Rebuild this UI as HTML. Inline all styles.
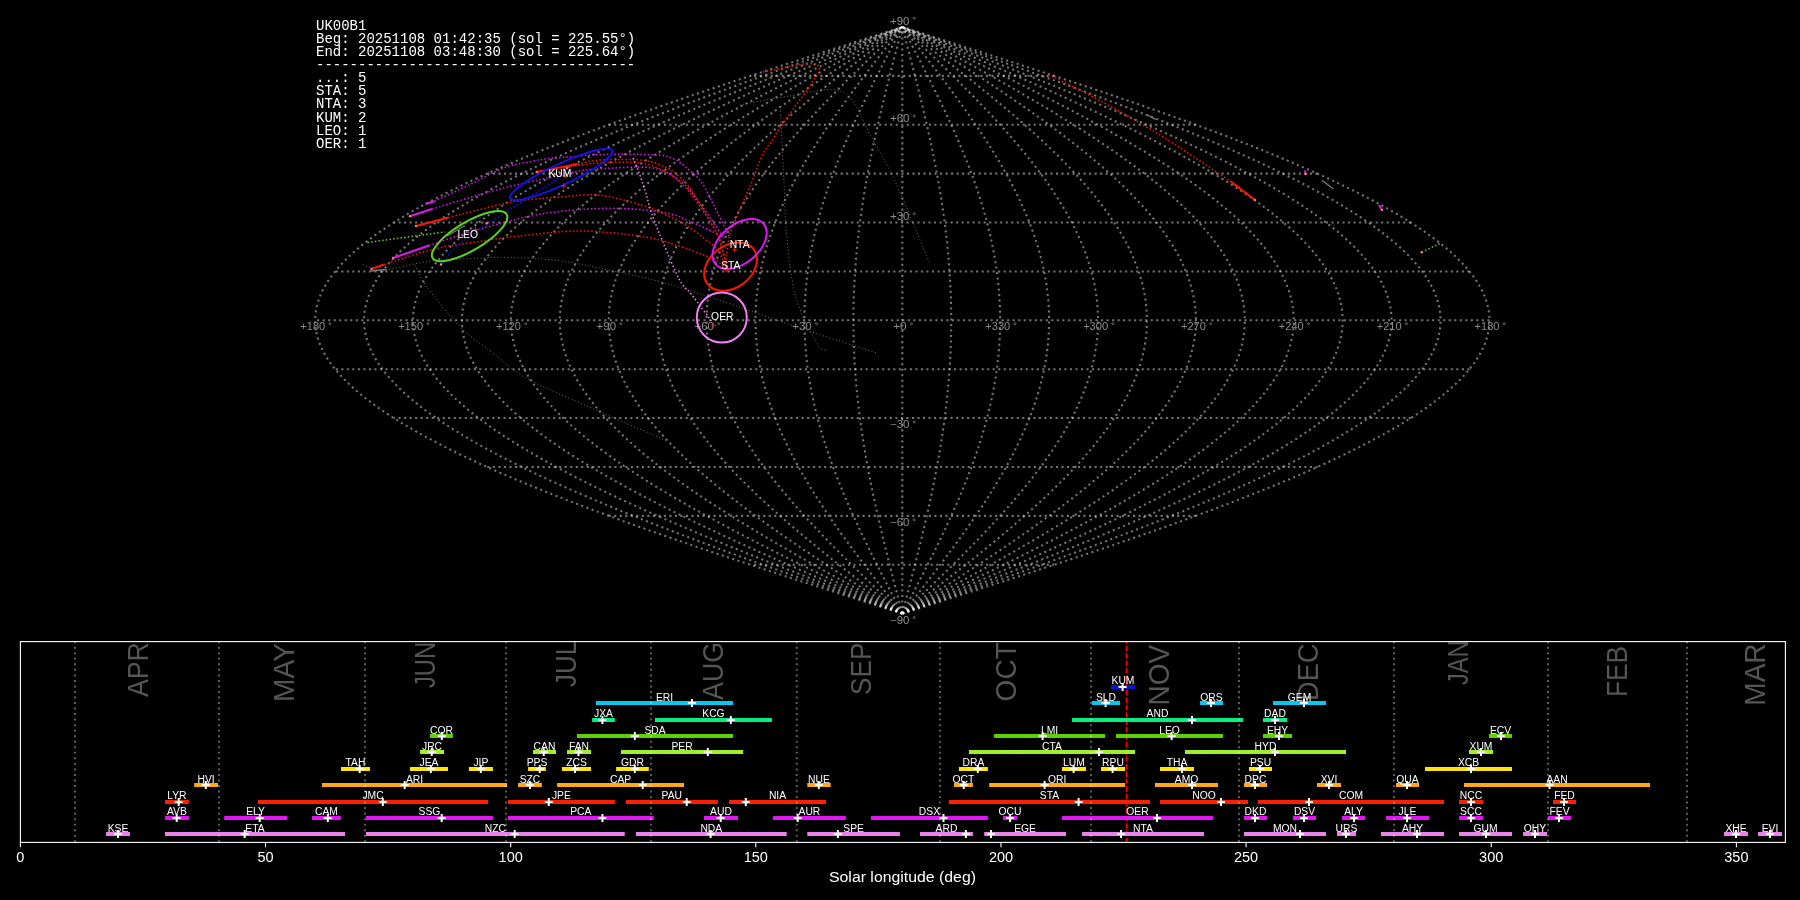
<!DOCTYPE html><html><head><meta charset="utf-8"><style>html,body{margin:0;padding:0;background:#000;width:1800px;height:900px;overflow:hidden}svg{display:block;will-change:transform}</style></head><body>
<svg width="1800" height="900" viewBox="0 0 1800 900">
<rect width="1800" height="900" fill="#000"/>
<g fill="none" stroke="#fff" stroke-opacity="0.45" stroke-width="2.08" stroke-dasharray="2.08 3.44">
<path d="M1054.27 564.73H750.33"/>
<path d="M1195.88 515.84H608.72"/>
<path d="M1317.48 466.96H487.12"/>
<path d="M1410.80 418.07H393.80"/>
<path d="M1469.45 369.19H335.15"/>
<path d="M1489.46 320.30H315.14"/>
<path d="M1469.45 271.42H335.15"/>
<path d="M1410.80 222.53H393.80"/>
<path d="M1317.48 173.65H487.12"/>
<path d="M1195.88 124.76H608.72"/>
<path d="M1054.27 75.88H750.33"/>
<path d="M902.30 613.61L912.55 610.35L922.79 607.09L933.03 603.83L943.26 600.57L953.47 597.32L963.67 594.06L973.86 590.80L984.02 587.54L994.15 584.28L1004.26 581.02L1014.34 577.76L1024.38 574.50L1034.38 571.24L1044.35 567.98L1054.27 564.73L1064.14 561.47L1073.97 558.21L1083.74 554.95L1093.46 551.69L1103.12 548.43L1112.72 545.17L1122.25 541.91L1131.72 538.65L1141.12 535.39L1150.44 532.13L1159.69 528.88L1168.87 525.62L1177.95 522.36L1186.96 519.10L1195.88 515.84L1204.71 512.58L1213.45 509.32L1222.09 506.06L1230.64 502.80L1239.08 499.55L1247.42 496.29L1255.66 493.03L1263.79 489.77L1271.81 486.51L1279.72 483.25L1287.51 479.99L1295.19 476.73L1302.74 473.47L1310.18 470.21L1317.48 466.96L1324.67 463.70L1331.72 460.44L1338.64 457.18L1345.44 453.92L1352.09 450.66L1358.61 447.40L1364.99 444.14L1371.23 440.88L1377.32 437.62L1383.27 434.37L1389.08 431.11L1394.73 427.85L1400.24 424.59L1405.59 421.33L1410.80 418.07L1415.84 414.81L1420.73 411.55L1425.46 408.29L1430.04 405.03L1434.45 401.77L1438.70 398.52L1442.78 395.26L1446.71 392.00L1450.46 388.74L1454.05 385.48L1457.47 382.22L1460.72 378.96L1463.80 375.70L1466.71 372.44L1469.45 369.19L1472.02 365.93L1474.41 362.67L1476.63 359.41L1478.67 356.15L1480.54 352.89L1482.23 349.63L1483.75 346.37L1485.08 343.11L1486.24 339.85L1487.23 336.60L1488.03 333.34L1488.66 330.08L1489.10 326.82L1489.37 323.56L1489.46 320.30L1489.37 317.04L1489.10 313.78L1488.66 310.52L1488.03 307.26L1487.23 304.00L1486.24 300.75L1485.08 297.49L1483.75 294.23L1482.23 290.97L1480.54 287.71L1478.67 284.45L1476.63 281.19L1474.41 277.93L1472.02 274.67L1469.45 271.42L1466.71 268.16L1463.80 264.90L1460.72 261.64L1457.47 258.38L1454.05 255.12L1450.46 251.86L1446.71 248.60L1442.78 245.34L1438.70 242.08L1434.45 238.83L1430.04 235.57L1425.46 232.31L1420.73 229.05L1415.84 225.79L1410.80 222.53L1405.59 219.27L1400.24 216.01L1394.73 212.75L1389.08 209.49L1383.27 206.24L1377.32 202.98L1371.23 199.72L1364.99 196.46L1358.61 193.20L1352.09 189.94L1345.44 186.68L1338.64 183.42L1331.72 180.16L1324.67 176.90L1317.48 173.65L1310.18 170.39L1302.74 167.13L1295.19 163.87L1287.51 160.61L1279.72 157.35L1271.81 154.09L1263.79 150.83L1255.66 147.57L1247.42 144.31L1239.08 141.06L1230.64 137.80L1222.09 134.54L1213.45 131.28L1204.71 128.02L1195.88 124.76L1186.96 121.50L1177.95 118.24L1168.87 114.98L1159.69 111.72L1150.44 108.47L1141.12 105.21L1131.72 101.95L1122.25 98.69L1112.72 95.43L1103.12 92.17L1093.46 88.91L1083.74 85.65L1073.97 82.39L1064.14 79.13L1054.27 75.88L1044.35 72.62L1034.38 69.36L1024.38 66.10L1014.34 62.84L1004.26 59.58L994.15 56.32L984.02 53.06L973.86 49.80L963.67 46.54L953.47 43.29L943.26 40.03L933.03 36.77L922.79 33.51L912.55 30.25L902.30 26.99"/>
<path d="M902.30 613.61L911.69 610.35L921.08 607.09L930.47 603.83L939.85 600.57L949.21 597.32L958.56 594.06L967.89 590.80L977.21 587.54L986.50 584.28L995.76 581.02L1005.00 577.76L1014.20 574.50L1023.38 571.24L1032.51 567.98L1041.60 564.73L1050.66 561.47L1059.66 558.21L1068.62 554.95L1077.53 551.69L1086.39 548.43L1095.18 545.17L1103.92 541.91L1112.60 538.65L1121.22 535.39L1129.77 532.13L1138.24 528.88L1146.65 525.62L1154.98 522.36L1163.24 519.10L1171.41 515.84L1179.51 512.58L1187.52 509.32L1195.44 506.06L1203.27 502.80L1211.02 499.55L1218.66 496.29L1226.21 493.03L1233.67 489.77L1241.02 486.51L1248.27 483.25L1255.41 479.99L1262.45 476.73L1269.37 473.47L1276.19 470.21L1282.89 466.96L1289.47 463.70L1295.94 460.44L1302.28 457.18L1308.51 453.92L1314.61 450.66L1320.58 447.40L1326.43 444.14L1332.15 440.88L1337.74 437.62L1343.19 434.37L1348.51 431.11L1353.70 427.85L1358.74 424.59L1363.65 421.33L1368.42 418.07L1373.05 414.81L1377.53 411.55L1381.87 408.29L1386.06 405.03L1390.10 401.77L1394.00 398.52L1397.74 395.26L1401.34 392.00L1404.78 388.74L1408.07 385.48L1411.21 382.22L1414.19 378.96L1417.01 375.70L1419.68 372.44L1422.19 369.19L1424.54 365.93L1426.74 362.67L1428.77 359.41L1430.64 356.15L1432.35 352.89L1433.90 349.63L1435.29 346.37L1436.52 343.11L1437.58 339.85L1438.48 336.60L1439.22 333.34L1439.79 330.08L1440.20 326.82L1440.45 323.56L1440.53 320.30L1440.45 317.04L1440.20 313.78L1439.79 310.52L1439.22 307.26L1438.48 304.00L1437.58 300.75L1436.52 297.49L1435.29 294.23L1433.90 290.97L1432.35 287.71L1430.64 284.45L1428.77 281.19L1426.74 277.93L1424.54 274.67L1422.19 271.42L1419.68 268.16L1417.01 264.90L1414.19 261.64L1411.21 258.38L1408.07 255.12L1404.78 251.86L1401.34 248.60L1397.74 245.34L1394.00 242.08L1390.10 238.83L1386.06 235.57L1381.87 232.31L1377.53 229.05L1373.05 225.79L1368.42 222.53L1363.65 219.27L1358.74 216.01L1353.70 212.75L1348.51 209.49L1343.19 206.24L1337.74 202.98L1332.15 199.72L1326.43 196.46L1320.58 193.20L1314.61 189.94L1308.51 186.68L1302.28 183.42L1295.94 180.16L1289.47 176.90L1282.89 173.65L1276.19 170.39L1269.37 167.13L1262.45 163.87L1255.41 160.61L1248.27 157.35L1241.02 154.09L1233.67 150.83L1226.21 147.57L1218.66 144.31L1211.02 141.06L1203.27 137.80L1195.44 134.54L1187.52 131.28L1179.51 128.02L1171.41 124.76L1163.24 121.50L1154.98 118.24L1146.65 114.98L1138.24 111.72L1129.77 108.47L1121.22 105.21L1112.60 101.95L1103.92 98.69L1095.18 95.43L1086.39 92.17L1077.53 88.91L1068.62 85.65L1059.66 82.39L1050.66 79.13L1041.60 75.88L1032.51 72.62L1023.38 69.36L1014.20 66.10L1005.00 62.84L995.76 59.58L986.50 56.32L977.21 53.06L967.89 49.80L958.56 46.54L949.21 43.29L939.85 40.03L930.47 36.77L921.08 33.51L911.69 30.25L902.30 26.99"/>
<path d="M902.30 613.61L910.84 610.35L919.38 607.09L927.91 603.83L936.43 600.57L944.95 597.32L953.45 594.06L961.93 590.80L970.40 587.54L978.84 584.28L987.27 581.02L995.66 577.76L1004.03 574.50L1012.37 571.24L1020.67 567.98L1028.94 564.73L1037.17 561.47L1045.36 558.21L1053.50 554.95L1061.60 551.69L1069.65 548.43L1077.65 545.17L1085.60 541.91L1093.48 538.65L1101.32 535.39L1109.09 532.13L1116.80 528.88L1124.44 525.62L1132.01 522.36L1139.52 519.10L1146.95 515.84L1154.31 512.58L1161.59 509.32L1168.79 506.06L1175.91 502.80L1182.95 499.55L1189.90 496.29L1196.77 493.03L1203.54 489.77L1210.23 486.51L1216.82 483.25L1223.31 479.99L1229.71 476.73L1236.00 473.47L1242.20 470.21L1248.29 466.96L1254.27 463.70L1260.15 460.44L1265.92 457.18L1271.58 453.92L1277.13 450.66L1282.56 447.40L1287.87 444.14L1293.07 440.88L1298.15 437.62L1303.11 434.37L1307.95 431.11L1312.66 427.85L1317.25 424.59L1321.71 421.33L1326.05 418.07L1330.25 414.81L1334.33 411.55L1338.27 408.29L1342.08 405.03L1345.76 401.77L1349.30 398.52L1352.70 395.26L1355.97 392.00L1359.10 388.74L1362.09 385.48L1364.94 382.22L1367.65 378.96L1370.22 375.70L1372.65 372.44L1374.93 369.19L1377.07 365.93L1379.06 362.67L1380.91 359.41L1382.61 356.15L1384.17 352.89L1385.58 349.63L1386.84 346.37L1387.95 343.11L1388.92 339.85L1389.74 336.60L1390.41 333.34L1390.93 330.08L1391.30 326.82L1391.53 323.56L1391.60 320.30L1391.53 317.04L1391.30 313.78L1390.93 310.52L1390.41 307.26L1389.74 304.00L1388.92 300.75L1387.95 297.49L1386.84 294.23L1385.58 290.97L1384.17 287.71L1382.61 284.45L1380.91 281.19L1379.06 277.93L1377.07 274.67L1374.93 271.42L1372.65 268.16L1370.22 264.90L1367.65 261.64L1364.94 258.38L1362.09 255.12L1359.10 251.86L1355.97 248.60L1352.70 245.34L1349.30 242.08L1345.76 238.83L1342.08 235.57L1338.27 232.31L1334.33 229.05L1330.25 225.79L1326.05 222.53L1321.71 219.27L1317.25 216.01L1312.66 212.75L1307.95 209.49L1303.11 206.24L1298.15 202.98L1293.07 199.72L1287.87 196.46L1282.56 193.20L1277.13 189.94L1271.58 186.68L1265.92 183.42L1260.15 180.16L1254.27 176.90L1248.29 173.65L1242.20 170.39L1236.00 167.13L1229.71 163.87L1223.31 160.61L1216.82 157.35L1210.23 154.09L1203.54 150.83L1196.77 147.57L1189.90 144.31L1182.95 141.06L1175.91 137.80L1168.79 134.54L1161.59 131.28L1154.31 128.02L1146.95 124.76L1139.52 121.50L1132.01 118.24L1124.44 114.98L1116.80 111.72L1109.09 108.47L1101.32 105.21L1093.48 101.95L1085.60 98.69L1077.65 95.43L1069.65 92.17L1061.60 88.91L1053.50 85.65L1045.36 82.39L1037.17 79.13L1028.94 75.88L1020.67 72.62L1012.37 69.36L1004.03 66.10L995.66 62.84L987.27 59.58L978.84 56.32L970.40 53.06L961.93 49.80L953.45 46.54L944.95 43.29L936.43 40.03L927.91 36.77L919.38 33.51L910.84 30.25L902.30 26.99"/>
<path d="M902.30 613.61L909.99 610.35L917.67 607.09L925.35 603.83L933.02 600.57L940.68 597.32L948.33 594.06L955.97 590.80L963.59 587.54L971.19 584.28L978.77 581.02L986.33 577.76L993.86 574.50L1001.36 571.24L1008.84 567.98L1016.28 564.73L1023.68 561.47L1031.05 558.21L1038.38 554.95L1045.67 551.69L1052.92 548.43L1060.11 545.17L1067.27 541.91L1074.37 538.65L1081.41 535.39L1088.41 532.13L1095.35 528.88L1102.22 525.62L1109.04 522.36L1115.80 519.10L1122.49 515.84L1129.11 512.58L1135.66 509.32L1142.14 506.06L1148.55 502.80L1154.89 499.55L1161.14 496.29L1167.32 493.03L1173.42 489.77L1179.43 486.51L1185.36 483.25L1191.21 479.99L1196.97 476.73L1202.63 473.47L1208.21 470.21L1213.69 466.96L1219.08 463.70L1224.37 460.44L1229.56 457.18L1234.65 453.92L1239.64 450.66L1244.53 447.40L1249.32 444.14L1254.00 440.88L1258.57 437.62L1263.03 434.37L1267.38 431.11L1271.63 427.85L1275.75 424.59L1279.77 421.33L1283.67 418.07L1287.46 414.81L1291.12 411.55L1294.67 408.29L1298.10 405.03L1301.41 401.77L1304.60 398.52L1307.66 395.26L1310.60 392.00L1313.42 388.74L1316.11 385.48L1318.68 382.22L1321.12 378.96L1323.43 375.70L1325.61 372.44L1327.66 369.19L1329.59 365.93L1331.38 362.67L1333.05 359.41L1334.58 356.15L1335.98 352.89L1337.25 349.63L1338.38 346.37L1339.39 343.11L1340.26 339.85L1340.99 336.60L1341.60 333.34L1342.07 330.08L1342.40 326.82L1342.60 323.56L1342.67 320.30L1342.60 317.04L1342.40 313.78L1342.07 310.52L1341.60 307.26L1340.99 304.00L1340.26 300.75L1339.39 297.49L1338.38 294.23L1337.25 290.97L1335.98 287.71L1334.58 284.45L1333.05 281.19L1331.38 277.93L1329.59 274.67L1327.66 271.42L1325.61 268.16L1323.43 264.90L1321.12 261.64L1318.68 258.38L1316.11 255.12L1313.42 251.86L1310.60 248.60L1307.66 245.34L1304.60 242.08L1301.41 238.83L1298.10 235.57L1294.67 232.31L1291.12 229.05L1287.46 225.79L1283.67 222.53L1279.77 219.27L1275.75 216.01L1271.63 212.75L1267.38 209.49L1263.03 206.24L1258.57 202.98L1254.00 199.72L1249.32 196.46L1244.53 193.20L1239.64 189.94L1234.65 186.68L1229.56 183.42L1224.37 180.16L1219.08 176.90L1213.69 173.65L1208.21 170.39L1202.63 167.13L1196.97 163.87L1191.21 160.61L1185.36 157.35L1179.43 154.09L1173.42 150.83L1167.32 147.57L1161.14 144.31L1154.89 141.06L1148.55 137.80L1142.14 134.54L1135.66 131.28L1129.11 128.02L1122.49 124.76L1115.80 121.50L1109.04 118.24L1102.22 114.98L1095.35 111.72L1088.41 108.47L1081.41 105.21L1074.37 101.95L1067.27 98.69L1060.11 95.43L1052.92 92.17L1045.67 88.91L1038.38 85.65L1031.05 82.39L1023.68 79.13L1016.28 75.88L1008.84 72.62L1001.36 69.36L993.86 66.10L986.33 62.84L978.77 59.58L971.19 56.32L963.59 53.06L955.97 49.80L948.33 46.54L940.68 43.29L933.02 40.03L925.35 36.77L917.67 33.51L909.99 30.25L902.30 26.99"/>
<path d="M902.30 613.61L909.13 610.35L915.96 607.09L922.79 603.83L929.61 600.57L936.42 597.32L943.22 594.06L950.00 590.80L956.78 587.54L963.53 584.28L970.27 581.02L976.99 577.76L983.68 574.50L990.35 571.24L997.00 567.98L1003.61 564.73L1010.20 561.47L1016.75 558.21L1023.26 554.95L1029.74 551.69L1036.18 548.43L1042.58 545.17L1048.94 541.91L1055.25 538.65L1061.51 535.39L1067.73 532.13L1073.90 528.88L1080.01 525.62L1086.07 522.36L1092.07 519.10L1098.02 515.84L1103.91 512.58L1109.73 509.32L1115.49 506.06L1121.19 502.80L1126.82 499.55L1132.38 496.29L1137.87 493.03L1143.29 489.77L1148.64 486.51L1153.91 483.25L1159.11 479.99L1164.22 476.73L1169.26 473.47L1174.22 470.21L1179.09 466.96L1183.88 463.70L1188.58 460.44L1193.20 457.18L1197.72 453.92L1202.16 450.66L1206.51 447.40L1210.76 444.14L1214.92 440.88L1218.98 437.62L1222.95 434.37L1226.82 431.11L1230.59 427.85L1234.26 424.59L1237.83 421.33L1241.30 418.07L1244.66 414.81L1247.92 411.55L1251.08 408.29L1254.12 405.03L1257.07 401.77L1259.90 398.52L1262.62 395.26L1265.24 392.00L1267.74 388.74L1270.13 385.48L1272.41 382.22L1274.58 378.96L1276.64 375.70L1278.58 372.44L1280.40 369.19L1282.11 365.93L1283.71 362.67L1285.19 359.41L1286.55 356.15L1287.79 352.89L1288.92 349.63L1289.93 346.37L1290.82 343.11L1291.60 339.85L1292.25 336.60L1292.79 333.34L1293.20 330.08L1293.50 326.82L1293.68 323.56L1293.74 320.30L1293.68 317.04L1293.50 313.78L1293.20 310.52L1292.79 307.26L1292.25 304.00L1291.60 300.75L1290.82 297.49L1289.93 294.23L1288.92 290.97L1287.79 287.71L1286.55 284.45L1285.19 281.19L1283.71 277.93L1282.11 274.67L1280.40 271.42L1278.58 268.16L1276.64 264.90L1274.58 261.64L1272.41 258.38L1270.13 255.12L1267.74 251.86L1265.24 248.60L1262.62 245.34L1259.90 242.08L1257.07 238.83L1254.12 235.57L1251.08 232.31L1247.92 229.05L1244.66 225.79L1241.30 222.53L1237.83 219.27L1234.26 216.01L1230.59 212.75L1226.82 209.49L1222.95 206.24L1218.98 202.98L1214.92 199.72L1210.76 196.46L1206.51 193.20L1202.16 189.94L1197.72 186.68L1193.20 183.42L1188.58 180.16L1183.88 176.90L1179.09 173.65L1174.22 170.39L1169.26 167.13L1164.22 163.87L1159.11 160.61L1153.91 157.35L1148.64 154.09L1143.29 150.83L1137.87 147.57L1132.38 144.31L1126.82 141.06L1121.19 137.80L1115.49 134.54L1109.73 131.28L1103.91 128.02L1098.02 124.76L1092.07 121.50L1086.07 118.24L1080.01 114.98L1073.90 111.72L1067.73 108.47L1061.51 105.21L1055.25 101.95L1048.94 98.69L1042.58 95.43L1036.18 92.17L1029.74 88.91L1023.26 85.65L1016.75 82.39L1010.20 79.13L1003.61 75.88L997.00 72.62L990.35 69.36L983.68 66.10L976.99 62.84L970.27 59.58L963.53 56.32L956.78 53.06L950.00 49.80L943.22 46.54L936.42 43.29L929.61 40.03L922.79 36.77L915.96 33.51L909.13 30.25L902.30 26.99"/>
<path d="M902.30 613.61L908.28 610.35L914.25 607.09L920.23 603.83L926.19 600.57L932.15 597.32L938.10 594.06L944.04 590.80L949.97 587.54L955.88 584.28L961.78 581.02L967.65 577.76L973.51 574.50L979.35 571.24L985.16 567.98L990.95 564.73L996.71 561.47L1002.44 558.21L1008.14 554.95L1013.81 551.69L1019.45 548.43L1025.04 545.17L1030.61 541.91L1036.13 538.65L1041.61 535.39L1047.05 532.13L1052.45 528.88L1057.80 525.62L1063.10 522.36L1068.35 519.10L1073.56 515.84L1078.71 512.58L1083.80 509.32L1088.84 506.06L1093.83 502.80L1098.76 499.55L1103.62 496.29L1108.43 493.03L1113.17 489.77L1117.85 486.51L1122.46 483.25L1127.01 479.99L1131.48 476.73L1135.89 473.47L1140.23 470.21L1144.49 466.96L1148.68 463.70L1152.80 460.44L1156.83 457.18L1160.80 453.92L1164.68 450.66L1168.48 447.40L1172.20 444.14L1175.84 440.88L1179.40 437.62L1182.87 434.37L1186.25 431.11L1189.55 427.85L1192.76 424.59L1195.89 421.33L1198.92 418.07L1201.87 414.81L1204.72 411.55L1207.48 408.29L1210.15 405.03L1212.72 401.77L1215.20 398.52L1217.58 395.26L1219.87 392.00L1222.06 388.74L1224.15 385.48L1226.15 382.22L1228.05 378.96L1229.84 375.70L1231.54 372.44L1233.14 369.19L1234.64 365.93L1236.03 362.67L1237.33 359.41L1238.52 356.15L1239.61 352.89L1240.59 349.63L1241.48 346.37L1242.26 343.11L1242.93 339.85L1243.51 336.60L1243.98 333.34L1244.34 330.08L1244.60 326.82L1244.76 323.56L1244.81 320.30L1244.76 317.04L1244.60 313.78L1244.34 310.52L1243.98 307.26L1243.51 304.00L1242.93 300.75L1242.26 297.49L1241.48 294.23L1240.59 290.97L1239.61 287.71L1238.52 284.45L1237.33 281.19L1236.03 277.93L1234.64 274.67L1233.14 271.42L1231.54 268.16L1229.84 264.90L1228.05 261.64L1226.15 258.38L1224.15 255.12L1222.06 251.86L1219.87 248.60L1217.58 245.34L1215.20 242.08L1212.72 238.83L1210.15 235.57L1207.48 232.31L1204.72 229.05L1201.87 225.79L1198.92 222.53L1195.89 219.27L1192.76 216.01L1189.55 212.75L1186.25 209.49L1182.87 206.24L1179.40 202.98L1175.84 199.72L1172.20 196.46L1168.48 193.20L1164.68 189.94L1160.80 186.68L1156.83 183.42L1152.80 180.16L1148.68 176.90L1144.49 173.65L1140.23 170.39L1135.89 167.13L1131.48 163.87L1127.01 160.61L1122.46 157.35L1117.85 154.09L1113.17 150.83L1108.43 147.57L1103.62 144.31L1098.76 141.06L1093.83 137.80L1088.84 134.54L1083.80 131.28L1078.71 128.02L1073.56 124.76L1068.35 121.50L1063.10 118.24L1057.80 114.98L1052.45 111.72L1047.05 108.47L1041.61 105.21L1036.13 101.95L1030.61 98.69L1025.04 95.43L1019.45 92.17L1013.81 88.91L1008.14 85.65L1002.44 82.39L996.71 79.13L990.95 75.88L985.16 72.62L979.35 69.36L973.51 66.10L967.65 62.84L961.78 59.58L955.88 56.32L949.97 53.06L944.04 49.80L938.10 46.54L932.15 43.29L926.19 40.03L920.23 36.77L914.25 33.51L908.28 30.25L902.30 26.99"/>
<path d="M902.30 613.61L907.42 610.35L912.55 607.09L917.66 603.83L922.78 600.57L927.89 597.32L932.99 594.06L938.08 590.80L943.16 587.54L948.23 584.28L953.28 581.02L958.32 577.76L963.34 574.50L968.34 571.24L973.32 567.98L978.28 564.73L983.22 561.47L988.13 558.21L993.02 554.95L997.88 551.69L1002.71 548.43L1007.51 545.17L1012.28 541.91L1017.01 538.65L1021.71 535.39L1026.37 532.13L1031.00 528.88L1035.58 525.62L1040.13 522.36L1044.63 519.10L1049.09 515.84L1053.50 512.58L1057.87 509.32L1062.20 506.06L1066.47 502.80L1070.69 499.55L1074.86 496.29L1078.98 493.03L1083.05 489.77L1087.06 486.51L1091.01 483.25L1094.91 479.99L1098.74 476.73L1102.52 473.47L1106.24 470.21L1109.89 466.96L1113.48 463.70L1117.01 460.44L1120.47 457.18L1123.87 453.92L1127.20 450.66L1130.45 447.40L1133.64 444.14L1136.76 440.88L1139.81 437.62L1142.79 434.37L1145.69 431.11L1148.52 427.85L1151.27 424.59L1153.95 421.33L1156.55 418.07L1159.07 414.81L1161.52 411.55L1163.88 408.29L1166.17 405.03L1168.37 401.77L1170.50 398.52L1172.54 395.26L1174.50 392.00L1176.38 388.74L1178.17 385.48L1179.89 382.22L1181.51 378.96L1183.05 375.70L1184.51 372.44L1185.88 369.19L1187.16 365.93L1188.36 362.67L1189.46 359.41L1190.49 356.15L1191.42 352.89L1192.27 349.63L1193.02 346.37L1193.69 343.11L1194.27 339.85L1194.76 336.60L1195.16 333.34L1195.48 330.08L1195.70 326.82L1195.84 323.56L1195.88 320.30L1195.84 317.04L1195.70 313.78L1195.48 310.52L1195.16 307.26L1194.76 304.00L1194.27 300.75L1193.69 297.49L1193.02 294.23L1192.27 290.97L1191.42 287.71L1190.49 284.45L1189.46 281.19L1188.36 277.93L1187.16 274.67L1185.88 271.42L1184.51 268.16L1183.05 264.90L1181.51 261.64L1179.89 258.38L1178.17 255.12L1176.38 251.86L1174.50 248.60L1172.54 245.34L1170.50 242.08L1168.37 238.83L1166.17 235.57L1163.88 232.31L1161.52 229.05L1159.07 225.79L1156.55 222.53L1153.95 219.27L1151.27 216.01L1148.52 212.75L1145.69 209.49L1142.79 206.24L1139.81 202.98L1136.76 199.72L1133.64 196.46L1130.45 193.20L1127.20 189.94L1123.87 186.68L1120.47 183.42L1117.01 180.16L1113.48 176.90L1109.89 173.65L1106.24 170.39L1102.52 167.13L1098.74 163.87L1094.91 160.61L1091.01 157.35L1087.06 154.09L1083.05 150.83L1078.98 147.57L1074.86 144.31L1070.69 141.06L1066.47 137.80L1062.20 134.54L1057.87 131.28L1053.50 128.02L1049.09 124.76L1044.63 121.50L1040.13 118.24L1035.58 114.98L1031.00 111.72L1026.37 108.47L1021.71 105.21L1017.01 101.95L1012.28 98.69L1007.51 95.43L1002.71 92.17L997.88 88.91L993.02 85.65L988.13 82.39L983.22 79.13L978.28 75.88L973.32 72.62L968.34 69.36L963.34 66.10L958.32 62.84L953.28 59.58L948.23 56.32L943.16 53.06L938.08 49.80L932.99 46.54L927.89 43.29L922.78 40.03L917.66 36.77L912.55 33.51L907.42 30.25L902.30 26.99"/>
<path d="M902.30 613.61L906.57 610.35L910.84 607.09L915.10 603.83L919.37 600.57L923.62 597.32L927.87 594.06L932.12 590.80L936.35 587.54L940.57 584.28L944.78 581.02L948.98 577.76L953.17 574.50L957.33 571.24L961.49 567.98L965.62 564.73L969.73 561.47L973.83 558.21L977.90 554.95L981.95 551.69L985.98 548.43L989.97 545.17L993.95 541.91L997.89 538.65L1001.81 535.39L1005.69 532.13L1009.55 528.88L1013.37 525.62L1017.16 522.36L1020.91 519.10L1024.62 515.84L1028.30 512.58L1031.94 509.32L1035.55 506.06L1039.11 502.80L1042.63 499.55L1046.10 496.29L1049.53 493.03L1052.92 489.77L1056.26 486.51L1059.56 483.25L1062.80 479.99L1066.00 476.73L1069.15 473.47L1072.25 470.21L1075.29 466.96L1078.29 463.70L1081.23 460.44L1084.11 457.18L1086.94 453.92L1089.71 450.66L1092.43 447.40L1095.09 444.14L1097.69 440.88L1100.23 437.62L1102.71 434.37L1105.12 431.11L1107.48 427.85L1109.77 424.59L1112.01 421.33L1114.17 418.07L1116.28 414.81L1118.31 411.55L1120.28 408.29L1122.19 405.03L1124.03 401.77L1125.80 398.52L1127.50 395.26L1129.14 392.00L1130.70 388.74L1132.20 385.48L1133.62 382.22L1134.98 378.96L1136.26 375.70L1137.47 372.44L1138.61 369.19L1139.68 365.93L1140.68 362.67L1141.60 359.41L1142.46 356.15L1143.23 352.89L1143.94 349.63L1144.57 346.37L1145.13 343.11L1145.61 339.85L1146.02 336.60L1146.35 333.34L1146.61 330.08L1146.80 326.82L1146.91 323.56L1146.95 320.30L1146.91 317.04L1146.80 313.78L1146.61 310.52L1146.35 307.26L1146.02 304.00L1145.61 300.75L1145.13 297.49L1144.57 294.23L1143.94 290.97L1143.23 287.71L1142.46 284.45L1141.60 281.19L1140.68 277.93L1139.68 274.67L1138.61 271.42L1137.47 268.16L1136.26 264.90L1134.98 261.64L1133.62 258.38L1132.20 255.12L1130.70 251.86L1129.14 248.60L1127.50 245.34L1125.80 242.08L1124.03 238.83L1122.19 235.57L1120.28 232.31L1118.31 229.05L1116.28 225.79L1114.17 222.53L1112.01 219.27L1109.77 216.01L1107.48 212.75L1105.12 209.49L1102.71 206.24L1100.23 202.98L1097.69 199.72L1095.09 196.46L1092.43 193.20L1089.71 189.94L1086.94 186.68L1084.11 183.42L1081.23 180.16L1078.29 176.90L1075.29 173.65L1072.25 170.39L1069.15 167.13L1066.00 163.87L1062.80 160.61L1059.56 157.35L1056.26 154.09L1052.92 150.83L1049.53 147.57L1046.10 144.31L1042.63 141.06L1039.11 137.80L1035.55 134.54L1031.94 131.28L1028.30 128.02L1024.62 124.76L1020.91 121.50L1017.16 118.24L1013.37 114.98L1009.55 111.72L1005.69 108.47L1001.81 105.21L997.89 101.95L993.95 98.69L989.97 95.43L985.98 92.17L981.95 88.91L977.90 85.65L973.83 82.39L969.73 79.13L965.62 75.88L961.49 72.62L957.33 69.36L953.17 66.10L948.98 62.84L944.78 59.58L940.57 56.32L936.35 53.06L932.12 49.80L927.87 46.54L923.62 43.29L919.37 40.03L915.10 36.77L910.84 33.51L906.57 30.25L902.30 26.99"/>
<path d="M902.30 613.61L905.72 610.35L909.13 607.09L912.54 603.83L915.95 600.57L919.36 597.32L922.76 594.06L926.15 590.80L929.54 587.54L932.92 584.28L936.29 581.02L939.65 577.76L942.99 574.50L946.33 571.24L949.65 567.98L952.96 564.73L956.25 561.47L959.52 558.21L962.78 554.95L966.02 551.69L969.24 548.43L972.44 545.17L975.62 541.91L978.77 538.65L981.91 535.39L985.01 532.13L988.10 528.88L991.16 525.62L994.18 522.36L997.19 519.10L1000.16 515.84L1003.10 512.58L1006.02 509.32L1008.90 506.06L1011.75 502.80L1014.56 499.55L1017.34 496.29L1020.09 493.03L1022.80 489.77L1025.47 486.51L1028.11 483.25L1030.70 479.99L1033.26 476.73L1035.78 473.47L1038.26 470.21L1040.69 466.96L1043.09 463.70L1045.44 460.44L1047.75 457.18L1050.01 453.92L1052.23 450.66L1054.40 447.40L1056.53 444.14L1058.61 440.88L1060.64 437.62L1062.62 434.37L1064.56 431.11L1066.44 427.85L1068.28 424.59L1070.06 421.33L1071.80 418.07L1073.48 414.81L1075.11 411.55L1076.69 408.29L1078.21 405.03L1079.68 401.77L1081.10 398.52L1082.46 395.26L1083.77 392.00L1085.02 388.74L1086.22 385.48L1087.36 382.22L1088.44 378.96L1089.47 375.70L1090.44 372.44L1091.35 369.19L1092.21 365.93L1093.00 362.67L1093.74 359.41L1094.42 356.15L1095.05 352.89L1095.61 349.63L1096.12 346.37L1096.56 343.11L1096.95 339.85L1097.28 336.60L1097.54 333.34L1097.75 330.08L1097.90 326.82L1097.99 323.56L1098.02 320.30L1097.99 317.04L1097.90 313.78L1097.75 310.52L1097.54 307.26L1097.28 304.00L1096.95 300.75L1096.56 297.49L1096.12 294.23L1095.61 290.97L1095.05 287.71L1094.42 284.45L1093.74 281.19L1093.00 277.93L1092.21 274.67L1091.35 271.42L1090.44 268.16L1089.47 264.90L1088.44 261.64L1087.36 258.38L1086.22 255.12L1085.02 251.86L1083.77 248.60L1082.46 245.34L1081.10 242.08L1079.68 238.83L1078.21 235.57L1076.69 232.31L1075.11 229.05L1073.48 225.79L1071.80 222.53L1070.06 219.27L1068.28 216.01L1066.44 212.75L1064.56 209.49L1062.62 206.24L1060.64 202.98L1058.61 199.72L1056.53 196.46L1054.40 193.20L1052.23 189.94L1050.01 186.68L1047.75 183.42L1045.44 180.16L1043.09 176.90L1040.69 173.65L1038.26 170.39L1035.78 167.13L1033.26 163.87L1030.70 160.61L1028.11 157.35L1025.47 154.09L1022.80 150.83L1020.09 147.57L1017.34 144.31L1014.56 141.06L1011.75 137.80L1008.90 134.54L1006.02 131.28L1003.10 128.02L1000.16 124.76L997.19 121.50L994.18 118.24L991.16 114.98L988.10 111.72L985.01 108.47L981.91 105.21L978.77 101.95L975.62 98.69L972.44 95.43L969.24 92.17L966.02 88.91L962.78 85.65L959.52 82.39L956.25 79.13L952.96 75.88L949.65 72.62L946.33 69.36L942.99 66.10L939.65 62.84L936.29 59.58L932.92 56.32L929.54 53.06L926.15 49.80L922.76 46.54L919.36 43.29L915.95 40.03L912.54 36.77L909.13 33.51L905.72 30.25L902.30 26.99"/>
<path d="M902.30 613.61L904.86 610.35L907.42 607.09L909.98 603.83L912.54 600.57L915.09 597.32L917.64 594.06L920.19 590.80L922.73 587.54L925.26 584.28L927.79 581.02L930.31 577.76L932.82 574.50L935.32 571.24L937.81 567.98L940.29 564.73L942.76 561.47L945.22 558.21L947.66 554.95L950.09 551.69L952.51 548.43L954.90 545.17L957.29 541.91L959.66 538.65L962.00 535.39L964.34 532.13L966.65 528.88L968.94 525.62L971.21 522.36L973.47 519.10L975.69 515.84L977.90 512.58L980.09 509.32L982.25 506.06L984.38 502.80L986.50 499.55L988.58 496.29L990.64 493.03L992.67 489.77L994.68 486.51L996.65 483.25L998.60 479.99L1000.52 476.73L1002.41 473.47L1004.27 470.21L1006.10 466.96L1007.89 463.70L1009.66 460.44L1011.39 457.18L1013.08 453.92L1014.75 450.66L1016.38 447.40L1017.97 444.14L1019.53 440.88L1021.06 437.62L1022.54 434.37L1023.99 431.11L1025.41 427.85L1026.78 424.59L1028.12 421.33L1029.42 418.07L1030.69 414.81L1031.91 411.55L1033.09 408.29L1034.23 405.03L1035.34 401.77L1036.40 398.52L1037.42 395.26L1038.40 392.00L1039.34 388.74L1040.24 385.48L1041.09 382.22L1041.91 378.96L1042.68 375.70L1043.40 372.44L1044.09 369.19L1044.73 365.93L1045.33 362.67L1045.88 359.41L1046.39 356.15L1046.86 352.89L1047.28 349.63L1047.66 346.37L1048.00 343.11L1048.29 339.85L1048.53 336.60L1048.73 333.34L1048.89 330.08L1049.00 326.82L1049.07 323.56L1049.09 320.30L1049.07 317.04L1049.00 313.78L1048.89 310.52L1048.73 307.26L1048.53 304.00L1048.29 300.75L1048.00 297.49L1047.66 294.23L1047.28 290.97L1046.86 287.71L1046.39 284.45L1045.88 281.19L1045.33 277.93L1044.73 274.67L1044.09 271.42L1043.40 268.16L1042.68 264.90L1041.91 261.64L1041.09 258.38L1040.24 255.12L1039.34 251.86L1038.40 248.60L1037.42 245.34L1036.40 242.08L1035.34 238.83L1034.23 235.57L1033.09 232.31L1031.91 229.05L1030.69 225.79L1029.42 222.53L1028.12 219.27L1026.78 216.01L1025.41 212.75L1023.99 209.49L1022.54 206.24L1021.06 202.98L1019.53 199.72L1017.97 196.46L1016.38 193.20L1014.75 189.94L1013.08 186.68L1011.39 183.42L1009.66 180.16L1007.89 176.90L1006.10 173.65L1004.27 170.39L1002.41 167.13L1000.52 163.87L998.60 160.61L996.65 157.35L994.68 154.09L992.67 150.83L990.64 147.57L988.58 144.31L986.50 141.06L984.38 137.80L982.25 134.54L980.09 131.28L977.90 128.02L975.69 124.76L973.47 121.50L971.21 118.24L968.94 114.98L966.65 111.72L964.34 108.47L962.00 105.21L959.66 101.95L957.29 98.69L954.90 95.43L952.51 92.17L950.09 88.91L947.66 85.65L945.22 82.39L942.76 79.13L940.29 75.88L937.81 72.62L935.32 69.36L932.82 66.10L930.31 62.84L927.79 59.58L925.26 56.32L922.73 53.06L920.19 49.80L917.64 46.54L915.09 43.29L912.54 40.03L909.98 36.77L907.42 33.51L904.86 30.25L902.30 26.99"/>
<path d="M902.30 613.61L904.01 610.35L905.72 607.09L907.42 603.83L909.13 600.57L910.83 597.32L912.53 594.06L914.23 590.80L915.92 587.54L917.61 584.28L919.29 581.02L920.97 577.76L922.65 574.50L924.31 571.24L925.97 567.98L927.63 564.73L929.27 561.47L930.91 558.21L932.54 554.95L934.16 551.69L935.77 548.43L937.37 545.17L938.96 541.91L940.54 538.65L942.10 535.39L943.66 532.13L945.20 528.88L946.73 525.62L948.24 522.36L949.74 519.10L951.23 515.84L952.70 512.58L954.16 509.32L955.60 506.06L957.02 502.80L958.43 499.55L959.82 496.29L961.19 493.03L962.55 489.77L963.89 486.51L965.20 483.25L966.50 479.99L967.78 476.73L969.04 473.47L970.28 470.21L971.50 466.96L972.69 463.70L973.87 460.44L975.02 457.18L976.16 453.92L977.27 450.66L978.35 447.40L979.41 444.14L980.45 440.88L981.47 437.62L982.46 434.37L983.43 431.11L984.37 427.85L985.29 424.59L986.18 421.33L987.05 418.07L987.89 414.81L988.71 411.55L989.49 408.29L990.26 405.03L990.99 401.77L991.70 398.52L992.38 395.26L993.03 392.00L993.66 388.74L994.26 385.48L994.83 382.22L995.37 378.96L995.88 375.70L996.37 372.44L996.83 369.19L997.25 365.93L997.65 362.67L998.02 359.41L998.36 356.15L998.67 352.89L998.96 349.63L999.21 346.37L999.43 343.11L999.62 339.85L999.79 336.60L999.92 333.34L1000.03 330.08L1000.10 326.82L1000.15 323.56L1000.16 320.30L1000.15 317.04L1000.10 313.78L1000.03 310.52L999.92 307.26L999.79 304.00L999.62 300.75L999.43 297.49L999.21 294.23L998.96 290.97L998.67 287.71L998.36 284.45L998.02 281.19L997.65 277.93L997.25 274.67L996.83 271.42L996.37 268.16L995.88 264.90L995.37 261.64L994.83 258.38L994.26 255.12L993.66 251.86L993.03 248.60L992.38 245.34L991.70 242.08L990.99 238.83L990.26 235.57L989.49 232.31L988.71 229.05L987.89 225.79L987.05 222.53L986.18 219.27L985.29 216.01L984.37 212.75L983.43 209.49L982.46 206.24L981.47 202.98L980.45 199.72L979.41 196.46L978.35 193.20L977.27 189.94L976.16 186.68L975.02 183.42L973.87 180.16L972.69 176.90L971.50 173.65L970.28 170.39L969.04 167.13L967.78 163.87L966.50 160.61L965.20 157.35L963.89 154.09L962.55 150.83L961.19 147.57L959.82 144.31L958.43 141.06L957.02 137.80L955.60 134.54L954.16 131.28L952.70 128.02L951.23 124.76L949.74 121.50L948.24 118.24L946.73 114.98L945.20 111.72L943.66 108.47L942.10 105.21L940.54 101.95L938.96 98.69L937.37 95.43L935.77 92.17L934.16 88.91L932.54 85.65L930.91 82.39L929.27 79.13L927.63 75.88L925.97 72.62L924.31 69.36L922.65 66.10L920.97 62.84L919.29 59.58L917.61 56.32L915.92 53.06L914.23 49.80L912.53 46.54L910.83 43.29L909.13 40.03L907.42 36.77L905.72 33.51L904.01 30.25L902.30 26.99"/>
<path d="M902.30 613.61L903.15 610.35L904.01 607.09L904.86 603.83L905.71 600.57L906.56 597.32L907.41 594.06L908.26 590.80L909.11 587.54L909.95 584.28L910.80 581.02L911.64 577.76L912.47 574.50L913.31 571.24L914.14 567.98L914.96 564.73L915.79 561.47L916.61 558.21L917.42 554.95L918.23 551.69L919.04 548.43L919.83 545.17L920.63 541.91L921.42 538.65L922.20 535.39L922.98 532.13L923.75 528.88L924.51 525.62L925.27 522.36L926.02 519.10L926.76 515.84L927.50 512.58L928.23 509.32L928.95 506.06L929.66 502.80L930.37 499.55L931.06 496.29L931.75 493.03L932.42 489.77L933.09 486.51L933.75 483.25L934.40 479.99L935.04 476.73L935.67 473.47L936.29 470.21L936.90 466.96L937.50 463.70L938.09 460.44L938.66 457.18L939.23 453.92L939.78 450.66L940.33 447.40L940.86 444.14L941.38 440.88L941.89 437.62L942.38 434.37L942.86 431.11L943.34 427.85L943.79 424.59L944.24 421.33L944.67 418.07L945.10 414.81L945.50 411.55L945.90 408.29L946.28 405.03L946.65 401.77L947.00 398.52L947.34 395.26L947.67 392.00L947.98 388.74L948.28 385.48L948.56 382.22L948.84 378.96L949.09 375.70L949.33 372.44L949.56 369.19L949.78 365.93L949.98 362.67L950.16 359.41L950.33 356.15L950.49 352.89L950.63 349.63L950.75 346.37L950.87 343.11L950.96 339.85L951.04 336.60L951.11 333.34L951.16 330.08L951.20 326.82L951.22 323.56L951.23 320.30L951.22 317.04L951.20 313.78L951.16 310.52L951.11 307.26L951.04 304.00L950.96 300.75L950.87 297.49L950.75 294.23L950.63 290.97L950.49 287.71L950.33 284.45L950.16 281.19L949.98 277.93L949.78 274.67L949.56 271.42L949.33 268.16L949.09 264.90L948.84 261.64L948.56 258.38L948.28 255.12L947.98 251.86L947.67 248.60L947.34 245.34L947.00 242.08L946.65 238.83L946.28 235.57L945.90 232.31L945.50 229.05L945.10 225.79L944.67 222.53L944.24 219.27L943.79 216.01L943.34 212.75L942.86 209.49L942.38 206.24L941.89 202.98L941.38 199.72L940.86 196.46L940.33 193.20L939.78 189.94L939.23 186.68L938.66 183.42L938.09 180.16L937.50 176.90L936.90 173.65L936.29 170.39L935.67 167.13L935.04 163.87L934.40 160.61L933.75 157.35L933.09 154.09L932.42 150.83L931.75 147.57L931.06 144.31L930.37 141.06L929.66 137.80L928.95 134.54L928.23 131.28L927.50 128.02L926.76 124.76L926.02 121.50L925.27 118.24L924.51 114.98L923.75 111.72L922.98 108.47L922.20 105.21L921.42 101.95L920.63 98.69L919.83 95.43L919.04 92.17L918.23 88.91L917.42 85.65L916.61 82.39L915.79 79.13L914.96 75.88L914.14 72.62L913.31 69.36L912.47 66.10L911.64 62.84L910.80 59.58L909.95 56.32L909.11 53.06L908.26 49.80L907.41 46.54L906.56 43.29L905.71 40.03L904.86 36.77L904.01 33.51L903.15 30.25L902.30 26.99"/>
<path d="M902.30 613.61L902.30 610.35L902.30 607.09L902.30 603.83L902.30 600.57L902.30 597.32L902.30 594.06L902.30 590.80L902.30 587.54L902.30 584.28L902.30 581.02L902.30 577.76L902.30 574.50L902.30 571.24L902.30 567.98L902.30 564.73L902.30 561.47L902.30 558.21L902.30 554.95L902.30 551.69L902.30 548.43L902.30 545.17L902.30 541.91L902.30 538.65L902.30 535.39L902.30 532.13L902.30 528.88L902.30 525.62L902.30 522.36L902.30 519.10L902.30 515.84L902.30 512.58L902.30 509.32L902.30 506.06L902.30 502.80L902.30 499.55L902.30 496.29L902.30 493.03L902.30 489.77L902.30 486.51L902.30 483.25L902.30 479.99L902.30 476.73L902.30 473.47L902.30 470.21L902.30 466.96L902.30 463.70L902.30 460.44L902.30 457.18L902.30 453.92L902.30 450.66L902.30 447.40L902.30 444.14L902.30 440.88L902.30 437.62L902.30 434.37L902.30 431.11L902.30 427.85L902.30 424.59L902.30 421.33L902.30 418.07L902.30 414.81L902.30 411.55L902.30 408.29L902.30 405.03L902.30 401.77L902.30 398.52L902.30 395.26L902.30 392.00L902.30 388.74L902.30 385.48L902.30 382.22L902.30 378.96L902.30 375.70L902.30 372.44L902.30 369.19L902.30 365.93L902.30 362.67L902.30 359.41L902.30 356.15L902.30 352.89L902.30 349.63L902.30 346.37L902.30 343.11L902.30 339.85L902.30 336.60L902.30 333.34L902.30 330.08L902.30 326.82L902.30 323.56L902.30 320.30L902.30 317.04L902.30 313.78L902.30 310.52L902.30 307.26L902.30 304.00L902.30 300.75L902.30 297.49L902.30 294.23L902.30 290.97L902.30 287.71L902.30 284.45L902.30 281.19L902.30 277.93L902.30 274.67L902.30 271.42L902.30 268.16L902.30 264.90L902.30 261.64L902.30 258.38L902.30 255.12L902.30 251.86L902.30 248.60L902.30 245.34L902.30 242.08L902.30 238.83L902.30 235.57L902.30 232.31L902.30 229.05L902.30 225.79L902.30 222.53L902.30 219.27L902.30 216.01L902.30 212.75L902.30 209.49L902.30 206.24L902.30 202.98L902.30 199.72L902.30 196.46L902.30 193.20L902.30 189.94L902.30 186.68L902.30 183.42L902.30 180.16L902.30 176.90L902.30 173.65L902.30 170.39L902.30 167.13L902.30 163.87L902.30 160.61L902.30 157.35L902.30 154.09L902.30 150.83L902.30 147.57L902.30 144.31L902.30 141.06L902.30 137.80L902.30 134.54L902.30 131.28L902.30 128.02L902.30 124.76L902.30 121.50L902.30 118.24L902.30 114.98L902.30 111.72L902.30 108.47L902.30 105.21L902.30 101.95L902.30 98.69L902.30 95.43L902.30 92.17L902.30 88.91L902.30 85.65L902.30 82.39L902.30 79.13L902.30 75.88L902.30 72.62L902.30 69.36L902.30 66.10L902.30 62.84L902.30 59.58L902.30 56.32L902.30 53.06L902.30 49.80L902.30 46.54L902.30 43.29L902.30 40.03L902.30 36.77L902.30 33.51L902.30 30.25L902.30 26.99"/>
<path d="M902.30 613.61L901.45 610.35L900.59 607.09L899.74 603.83L898.89 600.57L898.04 597.32L897.19 594.06L896.34 590.80L895.49 587.54L894.65 584.28L893.80 581.02L892.96 577.76L892.13 574.50L891.29 571.24L890.46 567.98L889.64 564.73L888.81 561.47L887.99 558.21L887.18 554.95L886.37 551.69L885.56 548.43L884.77 545.17L883.97 541.91L883.18 538.65L882.40 535.39L881.62 532.13L880.85 528.88L880.09 525.62L879.33 522.36L878.58 519.10L877.83 515.84L877.10 512.58L876.37 509.32L875.65 506.06L874.94 502.80L874.23 499.55L873.54 496.29L872.85 493.03L872.18 489.77L871.51 486.51L870.85 483.25L870.20 479.99L869.56 476.73L868.93 473.47L868.31 470.21L867.70 466.96L867.10 463.70L866.51 460.44L865.94 457.18L865.37 453.92L864.82 450.66L864.27 447.40L863.74 444.14L863.22 440.88L862.71 437.62L862.22 434.37L861.74 431.11L861.26 427.85L860.81 424.59L860.36 421.33L859.93 418.07L859.50 414.81L859.10 411.55L858.70 408.29L858.32 405.03L857.95 401.77L857.60 398.52L857.26 395.26L856.93 392.00L856.62 388.74L856.32 385.48L856.04 382.22L855.76 378.96L855.51 375.70L855.27 372.44L855.04 369.19L854.82 365.93L854.62 362.67L854.44 359.41L854.27 356.15L854.11 352.89L853.97 349.63L853.85 346.37L853.73 343.11L853.64 339.85L853.56 336.60L853.49 333.34L853.44 330.08L853.40 326.82L853.38 323.56L853.37 320.30L853.38 317.04L853.40 313.78L853.44 310.52L853.49 307.26L853.56 304.00L853.64 300.75L853.73 297.49L853.85 294.23L853.97 290.97L854.11 287.71L854.27 284.45L854.44 281.19L854.62 277.93L854.82 274.67L855.04 271.42L855.27 268.16L855.51 264.90L855.76 261.64L856.04 258.38L856.32 255.12L856.62 251.86L856.93 248.60L857.26 245.34L857.60 242.08L857.95 238.83L858.32 235.57L858.70 232.31L859.10 229.05L859.50 225.79L859.93 222.53L860.36 219.27L860.81 216.01L861.26 212.75L861.74 209.49L862.22 206.24L862.71 202.98L863.22 199.72L863.74 196.46L864.27 193.20L864.82 189.94L865.37 186.68L865.94 183.42L866.51 180.16L867.10 176.90L867.70 173.65L868.31 170.39L868.93 167.13L869.56 163.87L870.20 160.61L870.85 157.35L871.51 154.09L872.18 150.83L872.85 147.57L873.54 144.31L874.23 141.06L874.94 137.80L875.65 134.54L876.37 131.28L877.10 128.02L877.83 124.76L878.58 121.50L879.33 118.24L880.09 114.98L880.85 111.72L881.62 108.47L882.40 105.21L883.18 101.95L883.97 98.69L884.77 95.43L885.56 92.17L886.37 88.91L887.18 85.65L887.99 82.39L888.81 79.13L889.64 75.88L890.46 72.62L891.29 69.36L892.13 66.10L892.96 62.84L893.80 59.58L894.65 56.32L895.49 53.06L896.34 49.80L897.19 46.54L898.04 43.29L898.89 40.03L899.74 36.77L900.59 33.51L901.45 30.25L902.30 26.99"/>
<path d="M902.30 613.61L900.59 610.35L898.88 607.09L897.18 603.83L895.47 600.57L893.77 597.32L892.07 594.06L890.37 590.80L888.68 587.54L886.99 584.28L885.31 581.02L883.63 577.76L881.95 574.50L880.29 571.24L878.63 567.98L876.97 564.73L875.33 561.47L873.69 558.21L872.06 554.95L870.44 551.69L868.83 548.43L867.23 545.17L865.64 541.91L864.06 538.65L862.50 535.39L860.94 532.13L859.40 528.88L857.87 525.62L856.36 522.36L854.86 519.10L853.37 515.84L851.90 512.58L850.44 509.32L849.00 506.06L847.58 502.80L846.17 499.55L844.78 496.29L843.41 493.03L842.05 489.77L840.71 486.51L839.40 483.25L838.10 479.99L836.82 476.73L835.56 473.47L834.32 470.21L833.10 466.96L831.91 463.70L830.73 460.44L829.58 457.18L828.44 453.92L827.33 450.66L826.25 447.40L825.19 444.14L824.15 440.88L823.13 437.62L822.14 434.37L821.17 431.11L820.23 427.85L819.31 424.59L818.42 421.33L817.55 418.07L816.71 414.81L815.89 411.55L815.11 408.29L814.34 405.03L813.61 401.77L812.90 398.52L812.22 395.26L811.57 392.00L810.94 388.74L810.34 385.48L809.77 382.22L809.23 378.96L808.72 375.70L808.23 372.44L807.77 369.19L807.35 365.93L806.95 362.67L806.58 359.41L806.24 356.15L805.93 352.89L805.64 349.63L805.39 346.37L805.17 343.11L804.98 339.85L804.81 336.60L804.68 333.34L804.57 330.08L804.50 326.82L804.45 323.56L804.44 320.30L804.45 317.04L804.50 313.78L804.57 310.52L804.68 307.26L804.81 304.00L804.98 300.75L805.17 297.49L805.39 294.23L805.64 290.97L805.93 287.71L806.24 284.45L806.58 281.19L806.95 277.93L807.35 274.67L807.77 271.42L808.23 268.16L808.72 264.90L809.23 261.64L809.77 258.38L810.34 255.12L810.94 251.86L811.57 248.60L812.22 245.34L812.90 242.08L813.61 238.83L814.34 235.57L815.11 232.31L815.89 229.05L816.71 225.79L817.55 222.53L818.42 219.27L819.31 216.01L820.23 212.75L821.17 209.49L822.14 206.24L823.13 202.98L824.15 199.72L825.19 196.46L826.25 193.20L827.33 189.94L828.44 186.68L829.58 183.42L830.73 180.16L831.91 176.90L833.10 173.65L834.32 170.39L835.56 167.13L836.82 163.87L838.10 160.61L839.40 157.35L840.71 154.09L842.05 150.83L843.41 147.57L844.78 144.31L846.17 141.06L847.58 137.80L849.00 134.54L850.44 131.28L851.90 128.02L853.37 124.76L854.86 121.50L856.36 118.24L857.87 114.98L859.40 111.72L860.94 108.47L862.50 105.21L864.06 101.95L865.64 98.69L867.23 95.43L868.83 92.17L870.44 88.91L872.06 85.65L873.69 82.39L875.33 79.13L876.97 75.88L878.63 72.62L880.29 69.36L881.95 66.10L883.63 62.84L885.31 59.58L886.99 56.32L888.68 53.06L890.37 49.80L892.07 46.54L893.77 43.29L895.47 40.03L897.18 36.77L898.88 33.51L900.59 30.25L902.30 26.99"/>
<path d="M902.30 613.61L899.74 610.35L897.18 607.09L894.62 603.83L892.06 600.57L889.51 597.32L886.96 594.06L884.41 590.80L881.87 587.54L879.34 584.28L876.81 581.02L874.29 577.76L871.78 574.50L869.28 571.24L866.79 567.98L864.31 564.73L861.84 561.47L859.38 558.21L856.94 554.95L854.51 551.69L852.09 548.43L849.70 545.17L847.31 541.91L844.94 538.65L842.60 535.39L840.26 532.13L837.95 528.88L835.66 525.62L833.39 522.36L831.13 519.10L828.90 515.84L826.70 512.58L824.51 509.32L822.35 506.06L820.22 502.80L818.10 499.55L816.02 496.29L813.96 493.03L811.93 489.77L809.92 486.51L807.95 483.25L806.00 479.99L804.08 476.73L802.19 473.47L800.33 470.21L798.50 466.96L796.71 463.70L794.94 460.44L793.21 457.18L791.52 453.92L789.85 450.66L788.22 447.40L786.63 444.14L785.07 440.88L783.54 437.62L782.06 434.37L780.61 431.11L779.19 427.85L777.82 424.59L776.48 421.33L775.18 418.07L773.91 414.81L772.69 411.55L771.51 408.29L770.37 405.03L769.26 401.77L768.20 398.52L767.18 395.26L766.20 392.00L765.26 388.74L764.36 385.48L763.51 382.22L762.69 378.96L761.92 375.70L761.20 372.44L760.51 369.19L759.87 365.93L759.27 362.67L758.72 359.41L758.21 356.15L757.74 352.89L757.32 349.63L756.94 346.37L756.60 343.11L756.31 339.85L756.07 336.60L755.87 333.34L755.71 330.08L755.60 326.82L755.53 323.56L755.51 320.30L755.53 317.04L755.60 313.78L755.71 310.52L755.87 307.26L756.07 304.00L756.31 300.75L756.60 297.49L756.94 294.23L757.32 290.97L757.74 287.71L758.21 284.45L758.72 281.19L759.27 277.93L759.87 274.67L760.51 271.42L761.20 268.16L761.92 264.90L762.69 261.64L763.51 258.38L764.36 255.12L765.26 251.86L766.20 248.60L767.18 245.34L768.20 242.08L769.26 238.83L770.37 235.57L771.51 232.31L772.69 229.05L773.91 225.79L775.18 222.53L776.48 219.27L777.82 216.01L779.19 212.75L780.61 209.49L782.06 206.24L783.54 202.98L785.07 199.72L786.63 196.46L788.22 193.20L789.85 189.94L791.52 186.68L793.21 183.42L794.94 180.16L796.71 176.90L798.50 173.65L800.33 170.39L802.19 167.13L804.08 163.87L806.00 160.61L807.95 157.35L809.92 154.09L811.93 150.83L813.96 147.57L816.02 144.31L818.10 141.06L820.22 137.80L822.35 134.54L824.51 131.28L826.70 128.02L828.90 124.76L831.13 121.50L833.39 118.24L835.66 114.98L837.95 111.72L840.26 108.47L842.60 105.21L844.94 101.95L847.31 98.69L849.70 95.43L852.09 92.17L854.51 88.91L856.94 85.65L859.38 82.39L861.84 79.13L864.31 75.88L866.79 72.62L869.28 69.36L871.78 66.10L874.29 62.84L876.81 59.58L879.34 56.32L881.87 53.06L884.41 49.80L886.96 46.54L889.51 43.29L892.06 40.03L894.62 36.77L897.18 33.51L899.74 30.25L902.30 26.99"/>
<path d="M902.30 613.61L898.88 610.35L895.47 607.09L892.06 603.83L888.65 600.57L885.24 597.32L881.84 594.06L878.45 590.80L875.06 587.54L871.68 584.28L868.31 581.02L864.95 577.76L861.61 574.50L858.27 571.24L854.95 567.98L851.64 564.73L848.35 561.47L845.08 558.21L841.82 554.95L838.58 551.69L835.36 548.43L832.16 545.17L828.98 541.91L825.83 538.65L822.69 535.39L819.59 532.13L816.50 528.88L813.44 525.62L810.42 522.36L807.41 519.10L804.44 515.84L801.50 512.58L798.58 509.32L795.70 506.06L792.85 502.80L790.04 499.55L787.26 496.29L784.51 493.03L781.80 489.77L779.13 486.51L776.49 483.25L773.90 479.99L771.34 476.73L768.82 473.47L766.34 470.21L763.91 466.96L761.51 463.70L759.16 460.44L756.85 457.18L754.59 453.92L752.37 450.66L750.20 447.40L748.07 444.14L745.99 440.88L743.96 437.62L741.98 434.37L740.04 431.11L738.16 427.85L736.32 424.59L734.54 421.33L732.80 418.07L731.12 414.81L729.49 411.55L727.91 408.29L726.39 405.03L724.92 401.77L723.50 398.52L722.14 395.26L720.83 392.00L719.58 388.74L718.38 385.48L717.24 382.22L716.16 378.96L715.13 375.70L714.16 372.44L713.25 369.19L712.39 365.93L711.60 362.67L710.86 359.41L710.18 356.15L709.55 352.89L708.99 349.63L708.48 346.37L708.04 343.11L707.65 339.85L707.32 336.60L707.06 333.34L706.85 330.08L706.70 326.82L706.61 323.56L706.58 320.30L706.61 317.04L706.70 313.78L706.85 310.52L707.06 307.26L707.32 304.00L707.65 300.75L708.04 297.49L708.48 294.23L708.99 290.97L709.55 287.71L710.18 284.45L710.86 281.19L711.60 277.93L712.39 274.67L713.25 271.42L714.16 268.16L715.13 264.90L716.16 261.64L717.24 258.38L718.38 255.12L719.58 251.86L720.83 248.60L722.14 245.34L723.50 242.08L724.92 238.83L726.39 235.57L727.91 232.31L729.49 229.05L731.12 225.79L732.80 222.53L734.54 219.27L736.32 216.01L738.16 212.75L740.04 209.49L741.98 206.24L743.96 202.98L745.99 199.72L748.07 196.46L750.20 193.20L752.37 189.94L754.59 186.68L756.85 183.42L759.16 180.16L761.51 176.90L763.91 173.65L766.34 170.39L768.82 167.13L771.34 163.87L773.90 160.61L776.49 157.35L779.13 154.09L781.80 150.83L784.51 147.57L787.26 144.31L790.04 141.06L792.85 137.80L795.70 134.54L798.58 131.28L801.50 128.02L804.44 124.76L807.41 121.50L810.42 118.24L813.44 114.98L816.50 111.72L819.59 108.47L822.69 105.21L825.83 101.95L828.98 98.69L832.16 95.43L835.36 92.17L838.58 88.91L841.82 85.65L845.08 82.39L848.35 79.13L851.64 75.88L854.95 72.62L858.27 69.36L861.61 66.10L864.95 62.84L868.31 59.58L871.68 56.32L875.06 53.06L878.45 49.80L881.84 46.54L885.24 43.29L888.65 40.03L892.06 36.77L895.47 33.51L898.88 30.25L902.30 26.99"/>
<path d="M902.30 613.61L898.03 610.35L893.76 607.09L889.50 603.83L885.23 600.57L880.98 597.32L876.73 594.06L872.48 590.80L868.25 587.54L864.03 584.28L859.82 581.02L855.62 577.76L851.43 574.50L847.27 571.24L843.11 567.98L838.98 564.73L834.87 561.47L830.77 558.21L826.70 554.95L822.65 551.69L818.62 548.43L814.63 545.17L810.65 541.91L806.71 538.65L802.79 535.39L798.91 532.13L795.05 528.88L791.23 525.62L787.44 522.36L783.69 519.10L779.97 515.84L776.30 512.58L772.66 509.32L769.05 506.06L765.49 502.80L761.97 499.55L758.50 496.29L755.07 493.03L751.68 489.77L748.34 486.51L745.04 483.25L741.80 479.99L738.60 476.73L735.45 473.47L732.35 470.21L729.31 466.96L726.31 463.70L723.37 460.44L720.49 457.18L717.66 453.92L714.89 450.66L712.17 447.40L709.51 444.14L706.91 440.88L704.37 437.62L701.89 434.37L699.48 431.11L697.12 427.85L694.83 424.59L692.59 421.33L690.43 418.07L688.32 414.81L686.29 411.55L684.32 408.29L682.41 405.03L680.57 401.77L678.80 398.52L677.10 395.26L675.46 392.00L673.90 388.74L672.40 385.48L670.98 382.22L669.62 378.96L668.34 375.70L667.13 372.44L665.99 369.19L664.92 365.93L663.92 362.67L663.00 359.41L662.14 356.15L661.37 352.89L660.66 349.63L660.03 346.37L659.47 343.11L658.99 339.85L658.58 336.60L658.25 333.34L657.99 330.08L657.80 326.82L657.69 323.56L657.65 320.30L657.69 317.04L657.80 313.78L657.99 310.52L658.25 307.26L658.58 304.00L658.99 300.75L659.47 297.49L660.03 294.23L660.66 290.97L661.37 287.71L662.14 284.45L663.00 281.19L663.92 277.93L664.92 274.67L665.99 271.42L667.13 268.16L668.34 264.90L669.62 261.64L670.98 258.38L672.40 255.12L673.90 251.86L675.46 248.60L677.10 245.34L678.80 242.08L680.57 238.83L682.41 235.57L684.32 232.31L686.29 229.05L688.32 225.79L690.43 222.53L692.59 219.27L694.83 216.01L697.12 212.75L699.48 209.49L701.89 206.24L704.37 202.98L706.91 199.72L709.51 196.46L712.17 193.20L714.89 189.94L717.66 186.68L720.49 183.42L723.37 180.16L726.31 176.90L729.31 173.65L732.35 170.39L735.45 167.13L738.60 163.87L741.80 160.61L745.04 157.35L748.34 154.09L751.68 150.83L755.07 147.57L758.50 144.31L761.97 141.06L765.49 137.80L769.05 134.54L772.66 131.28L776.30 128.02L779.97 124.76L783.69 121.50L787.44 118.24L791.23 114.98L795.05 111.72L798.91 108.47L802.79 105.21L806.71 101.95L810.65 98.69L814.63 95.43L818.62 92.17L822.65 88.91L826.70 85.65L830.77 82.39L834.87 79.13L838.98 75.88L843.11 72.62L847.27 69.36L851.43 66.10L855.62 62.84L859.82 59.58L864.03 56.32L868.25 53.06L872.48 49.80L876.73 46.54L880.98 43.29L885.23 40.03L889.50 36.77L893.76 33.51L898.03 30.25L902.30 26.99"/>
<path d="M902.30 613.61L897.18 610.35L892.05 607.09L886.94 603.83L881.82 600.57L876.71 597.32L871.61 594.06L866.52 590.80L861.44 587.54L856.37 584.28L851.32 581.02L846.28 577.76L841.26 574.50L836.26 571.24L831.28 567.98L826.32 564.73L821.38 561.47L816.47 558.21L811.58 554.95L806.72 551.69L801.89 548.43L797.09 545.17L792.32 541.91L787.59 538.65L782.89 535.39L778.23 532.13L773.60 528.88L769.02 525.62L764.47 522.36L759.97 519.10L755.51 515.84L751.10 512.58L746.73 509.32L742.40 506.06L738.13 502.80L733.91 499.55L729.74 496.29L725.62 493.03L721.55 489.77L717.54 486.51L713.59 483.25L709.69 479.99L705.86 476.73L702.08 473.47L698.36 470.21L694.71 466.96L691.12 463.70L687.59 460.44L684.13 457.18L680.73 453.92L677.40 450.66L674.15 447.40L670.96 444.14L667.84 440.88L664.79 437.62L661.81 434.37L658.91 431.11L656.08 427.85L653.33 424.59L650.65 421.33L648.05 418.07L645.53 414.81L643.08 411.55L640.72 408.29L638.43 405.03L636.23 401.77L634.10 398.52L632.06 395.26L630.10 392.00L628.22 388.74L626.43 385.48L624.71 382.22L623.09 378.96L621.55 375.70L620.09 372.44L618.72 369.19L617.44 365.93L616.24 362.67L615.14 359.41L614.11 356.15L613.18 352.89L612.33 349.63L611.58 346.37L610.91 343.11L610.33 339.85L609.84 336.60L609.44 333.34L609.12 330.08L608.90 326.82L608.76 323.56L608.72 320.30L608.76 317.04L608.90 313.78L609.12 310.52L609.44 307.26L609.84 304.00L610.33 300.75L610.91 297.49L611.58 294.23L612.33 290.97L613.18 287.71L614.11 284.45L615.14 281.19L616.24 277.93L617.44 274.67L618.72 271.42L620.09 268.16L621.55 264.90L623.09 261.64L624.71 258.38L626.43 255.12L628.22 251.86L630.10 248.60L632.06 245.34L634.10 242.08L636.23 238.83L638.43 235.57L640.72 232.31L643.08 229.05L645.53 225.79L648.05 222.53L650.65 219.27L653.33 216.01L656.08 212.75L658.91 209.49L661.81 206.24L664.79 202.98L667.84 199.72L670.96 196.46L674.15 193.20L677.40 189.94L680.73 186.68L684.13 183.42L687.59 180.16L691.12 176.90L694.71 173.65L698.36 170.39L702.08 167.13L705.86 163.87L709.69 160.61L713.59 157.35L717.54 154.09L721.55 150.83L725.62 147.57L729.74 144.31L733.91 141.06L738.13 137.80L742.40 134.54L746.73 131.28L751.10 128.02L755.51 124.76L759.97 121.50L764.47 118.24L769.02 114.98L773.60 111.72L778.23 108.47L782.89 105.21L787.59 101.95L792.32 98.69L797.09 95.43L801.89 92.17L806.72 88.91L811.58 85.65L816.47 82.39L821.38 79.13L826.32 75.88L831.28 72.62L836.26 69.36L841.26 66.10L846.28 62.84L851.32 59.58L856.37 56.32L861.44 53.06L866.52 49.80L871.61 46.54L876.71 43.29L881.82 40.03L886.94 36.77L892.05 33.51L897.18 30.25L902.30 26.99"/>
<path d="M902.30 613.61L896.32 610.35L890.35 607.09L884.37 603.83L878.41 600.57L872.45 597.32L866.50 594.06L860.56 590.80L854.63 587.54L848.72 584.28L842.82 581.02L836.95 577.76L831.09 574.50L825.25 571.24L819.44 567.98L813.65 564.73L807.89 561.47L802.16 558.21L796.46 554.95L790.79 551.69L785.15 548.43L779.56 545.17L773.99 541.91L768.47 538.65L762.99 535.39L757.55 532.13L752.15 528.88L746.80 525.62L741.50 522.36L736.25 519.10L731.04 515.84L725.89 512.58L720.80 509.32L715.76 506.06L710.77 502.80L705.84 499.55L700.98 496.29L696.17 493.03L691.43 489.77L686.75 486.51L682.14 483.25L677.59 479.99L673.12 476.73L668.71 473.47L664.37 470.21L660.11 466.96L655.92 463.70L651.80 460.44L647.77 457.18L643.80 453.92L639.92 450.66L636.12 447.40L632.40 444.14L628.76 440.88L625.20 437.62L621.73 434.37L618.35 431.11L615.05 427.85L611.84 424.59L608.71 421.33L605.68 418.07L602.73 414.81L599.88 411.55L597.12 408.29L594.45 405.03L591.88 401.77L589.40 398.52L587.02 395.26L584.73 392.00L582.54 388.74L580.45 385.48L578.45 382.22L576.55 378.96L574.76 375.70L573.06 372.44L571.46 369.19L569.96 365.93L568.57 362.67L567.27 359.41L566.08 356.15L564.99 352.89L564.01 349.63L563.12 346.37L562.34 343.11L561.67 339.85L561.09 336.60L560.62 333.34L560.26 330.08L560.00 326.82L559.84 323.56L559.79 320.30L559.84 317.04L560.00 313.78L560.26 310.52L560.62 307.26L561.09 304.00L561.67 300.75L562.34 297.49L563.12 294.23L564.01 290.97L564.99 287.71L566.08 284.45L567.27 281.19L568.57 277.93L569.96 274.67L571.46 271.42L573.06 268.16L574.76 264.90L576.55 261.64L578.45 258.38L580.45 255.12L582.54 251.86L584.73 248.60L587.02 245.34L589.40 242.08L591.88 238.83L594.45 235.57L597.12 232.31L599.88 229.05L602.73 225.79L605.68 222.53L608.71 219.27L611.84 216.01L615.05 212.75L618.35 209.49L621.73 206.24L625.20 202.98L628.76 199.72L632.40 196.46L636.12 193.20L639.92 189.94L643.80 186.68L647.77 183.42L651.80 180.16L655.92 176.90L660.11 173.65L664.37 170.39L668.71 167.13L673.12 163.87L677.59 160.61L682.14 157.35L686.75 154.09L691.43 150.83L696.17 147.57L700.98 144.31L705.84 141.06L710.77 137.80L715.76 134.54L720.80 131.28L725.89 128.02L731.04 124.76L736.25 121.50L741.50 118.24L746.80 114.98L752.15 111.72L757.55 108.47L762.99 105.21L768.47 101.95L773.99 98.69L779.56 95.43L785.15 92.17L790.79 88.91L796.46 85.65L802.16 82.39L807.89 79.13L813.65 75.88L819.44 72.62L825.25 69.36L831.09 66.10L836.95 62.84L842.82 59.58L848.72 56.32L854.63 53.06L860.56 49.80L866.50 46.54L872.45 43.29L878.41 40.03L884.37 36.77L890.35 33.51L896.32 30.25L902.30 26.99"/>
<path d="M902.30 613.61L895.47 610.35L888.64 607.09L881.81 603.83L874.99 600.57L868.18 597.32L861.38 594.06L854.60 590.80L847.82 587.54L841.07 584.28L834.33 581.02L827.61 577.76L820.92 574.50L814.25 571.24L807.60 567.98L800.99 564.73L794.40 561.47L787.85 558.21L781.34 554.95L774.86 551.69L768.42 548.43L762.02 545.17L755.66 541.91L749.35 538.65L743.09 535.39L736.87 532.13L730.70 528.88L724.59 525.62L718.53 522.36L712.53 519.10L706.58 515.84L700.69 512.58L694.87 509.32L689.11 506.06L683.41 502.80L677.78 499.55L672.22 496.29L666.73 493.03L661.31 489.77L655.96 486.51L650.69 483.25L645.49 479.99L640.38 476.73L635.34 473.47L630.38 470.21L625.51 466.96L620.72 463.70L616.02 460.44L611.40 457.18L606.88 453.92L602.44 450.66L598.09 447.40L593.84 444.14L589.68 440.88L585.62 437.62L581.65 434.37L577.78 431.11L574.01 427.85L570.34 424.59L566.77 421.33L563.30 418.07L559.94 414.81L556.68 411.55L553.52 408.29L550.48 405.03L547.53 401.77L544.70 398.52L541.98 395.26L539.36 392.00L536.86 388.74L534.47 385.48L532.19 382.22L530.02 378.96L527.96 375.70L526.02 372.44L524.20 369.19L522.49 365.93L520.89 362.67L519.41 359.41L518.05 356.15L516.81 352.89L515.68 349.63L514.67 346.37L513.78 343.11L513.00 339.85L512.35 336.60L511.81 333.34L511.40 330.08L511.10 326.82L510.92 323.56L510.86 320.30L510.92 317.04L511.10 313.78L511.40 310.52L511.81 307.26L512.35 304.00L513.00 300.75L513.78 297.49L514.67 294.23L515.68 290.97L516.81 287.71L518.05 284.45L519.41 281.19L520.89 277.93L522.49 274.67L524.20 271.42L526.02 268.16L527.96 264.90L530.02 261.64L532.19 258.38L534.47 255.12L536.86 251.86L539.36 248.60L541.98 245.34L544.70 242.08L547.53 238.83L550.48 235.57L553.52 232.31L556.68 229.05L559.94 225.79L563.30 222.53L566.77 219.27L570.34 216.01L574.01 212.75L577.78 209.49L581.65 206.24L585.62 202.98L589.68 199.72L593.84 196.46L598.09 193.20L602.44 189.94L606.88 186.68L611.40 183.42L616.02 180.16L620.72 176.90L625.51 173.65L630.38 170.39L635.34 167.13L640.38 163.87L645.49 160.61L650.69 157.35L655.96 154.09L661.31 150.83L666.73 147.57L672.22 144.31L677.78 141.06L683.41 137.80L689.11 134.54L694.87 131.28L700.69 128.02L706.58 124.76L712.53 121.50L718.53 118.24L724.59 114.98L730.70 111.72L736.87 108.47L743.09 105.21L749.35 101.95L755.66 98.69L762.02 95.43L768.42 92.17L774.86 88.91L781.34 85.65L787.85 82.39L794.40 79.13L800.99 75.88L807.60 72.62L814.25 69.36L820.92 66.10L827.61 62.84L834.33 59.58L841.07 56.32L847.82 53.06L854.60 49.80L861.38 46.54L868.18 43.29L874.99 40.03L881.81 36.77L888.64 33.51L895.47 30.25L902.30 26.99"/>
<path d="M902.30 613.61L894.61 610.35L886.93 607.09L879.25 603.83L871.58 600.57L863.92 597.32L856.27 594.06L848.63 590.80L841.01 587.54L833.41 584.28L825.83 581.02L818.27 577.76L810.74 574.50L803.24 571.24L795.76 567.98L788.32 564.73L780.92 561.47L773.55 558.21L766.22 554.95L758.93 551.69L751.68 548.43L744.49 545.17L737.33 541.91L730.23 538.65L723.19 535.39L716.19 532.13L709.25 528.88L702.38 525.62L695.56 522.36L688.80 519.10L682.11 515.84L675.49 512.58L668.94 509.32L662.46 506.06L656.05 502.80L649.71 499.55L643.46 496.29L637.28 493.03L631.18 489.77L625.17 486.51L619.24 483.25L613.39 479.99L607.63 476.73L601.97 473.47L596.39 470.21L590.91 466.96L585.52 463.70L580.23 460.44L575.04 457.18L569.95 453.92L564.96 450.66L560.07 447.40L555.28 444.14L550.60 440.88L546.03 437.62L541.57 434.37L537.22 431.11L532.97 427.85L528.85 424.59L524.83 421.33L520.93 418.07L517.14 414.81L513.48 411.55L509.93 408.29L506.50 405.03L503.19 401.77L500.00 398.52L496.94 395.26L494.00 392.00L491.18 388.74L488.49 385.48L485.92 382.22L483.48 378.96L481.17 375.70L478.99 372.44L476.94 369.19L475.01 365.93L473.22 362.67L471.55 359.41L470.02 356.15L468.62 352.89L467.35 349.63L466.22 346.37L465.21 343.11L464.34 339.85L463.61 336.60L463.00 333.34L462.53 330.08L462.20 326.82L462.00 323.56L461.93 320.30L462.00 317.04L462.20 313.78L462.53 310.52L463.00 307.26L463.61 304.00L464.34 300.75L465.21 297.49L466.22 294.23L467.35 290.97L468.62 287.71L470.02 284.45L471.55 281.19L473.22 277.93L475.01 274.67L476.94 271.42L478.99 268.16L481.17 264.90L483.48 261.64L485.92 258.38L488.49 255.12L491.18 251.86L494.00 248.60L496.94 245.34L500.00 242.08L503.19 238.83L506.50 235.57L509.93 232.31L513.48 229.05L517.14 225.79L520.93 222.53L524.83 219.27L528.85 216.01L532.97 212.75L537.22 209.49L541.57 206.24L546.03 202.98L550.60 199.72L555.28 196.46L560.07 193.20L564.96 189.94L569.95 186.68L575.04 183.42L580.23 180.16L585.52 176.90L590.91 173.65L596.39 170.39L601.97 167.13L607.63 163.87L613.39 160.61L619.24 157.35L625.17 154.09L631.18 150.83L637.28 147.57L643.46 144.31L649.71 141.06L656.05 137.80L662.46 134.54L668.94 131.28L675.49 128.02L682.11 124.76L688.80 121.50L695.56 118.24L702.38 114.98L709.25 111.72L716.19 108.47L723.19 105.21L730.23 101.95L737.33 98.69L744.49 95.43L751.68 92.17L758.93 88.91L766.22 85.65L773.55 82.39L780.92 79.13L788.32 75.88L795.76 72.62L803.24 69.36L810.74 66.10L818.27 62.84L825.83 59.58L833.41 56.32L841.01 53.06L848.63 49.80L856.27 46.54L863.92 43.29L871.58 40.03L879.25 36.77L886.93 33.51L894.61 30.25L902.30 26.99"/>
<path d="M902.30 613.61L893.76 610.35L885.22 607.09L876.69 603.83L868.17 600.57L859.65 597.32L851.15 594.06L842.67 590.80L834.20 587.54L825.76 584.28L817.33 581.02L808.94 577.76L800.57 574.50L792.23 571.24L783.93 567.98L775.66 564.73L767.43 561.47L759.24 558.21L751.10 554.95L743.00 551.69L734.95 548.43L726.95 545.17L719.00 541.91L711.12 538.65L703.28 535.39L695.51 532.13L687.80 528.88L680.16 525.62L672.59 522.36L665.08 519.10L657.65 515.84L650.29 512.58L643.01 509.32L635.81 506.06L628.69 502.80L621.65 499.55L614.70 496.29L607.83 493.03L601.06 489.77L594.37 486.51L587.78 483.25L581.29 479.99L574.89 476.73L568.60 473.47L562.40 470.21L556.31 466.96L550.33 463.70L544.45 460.44L538.68 457.18L533.02 453.92L527.47 450.66L522.04 447.40L516.73 444.14L511.53 440.88L506.45 437.62L501.49 434.37L496.65 431.11L491.94 427.85L487.35 424.59L482.89 421.33L478.55 418.07L474.35 414.81L470.27 411.55L466.33 408.29L462.52 405.03L458.84 401.77L455.30 398.52L451.90 395.26L448.63 392.00L445.50 388.74L442.51 385.48L439.66 382.22L436.95 378.96L434.38 375.70L431.95 372.44L429.67 369.19L427.53 365.93L425.54 362.67L423.69 359.41L421.99 356.15L420.43 352.89L419.02 349.63L417.76 346.37L416.65 343.11L415.68 339.85L414.86 336.60L414.19 333.34L413.67 330.08L413.30 326.82L413.07 323.56L413.00 320.30L413.07 317.04L413.30 313.78L413.67 310.52L414.19 307.26L414.86 304.00L415.68 300.75L416.65 297.49L417.76 294.23L419.02 290.97L420.43 287.71L421.99 284.45L423.69 281.19L425.54 277.93L427.53 274.67L429.67 271.42L431.95 268.16L434.38 264.90L436.95 261.64L439.66 258.38L442.51 255.12L445.50 251.86L448.63 248.60L451.90 245.34L455.30 242.08L458.84 238.83L462.52 235.57L466.33 232.31L470.27 229.05L474.35 225.79L478.55 222.53L482.89 219.27L487.35 216.01L491.94 212.75L496.65 209.49L501.49 206.24L506.45 202.98L511.53 199.72L516.73 196.46L522.04 193.20L527.47 189.94L533.02 186.68L538.68 183.42L544.45 180.16L550.33 176.90L556.31 173.65L562.40 170.39L568.60 167.13L574.89 163.87L581.29 160.61L587.78 157.35L594.37 154.09L601.06 150.83L607.83 147.57L614.70 144.31L621.65 141.06L628.69 137.80L635.81 134.54L643.01 131.28L650.29 128.02L657.65 124.76L665.08 121.50L672.59 118.24L680.16 114.98L687.80 111.72L695.51 108.47L703.28 105.21L711.12 101.95L719.00 98.69L726.95 95.43L734.95 92.17L743.00 88.91L751.10 85.65L759.24 82.39L767.43 79.13L775.66 75.88L783.93 72.62L792.23 69.36L800.57 66.10L808.94 62.84L817.33 59.58L825.76 56.32L834.20 53.06L842.67 49.80L851.15 46.54L859.65 43.29L868.17 40.03L876.69 36.77L885.22 33.51L893.76 30.25L902.30 26.99"/>
<path d="M902.30 613.61L892.91 610.35L883.52 607.09L874.13 603.83L864.75 600.57L855.39 597.32L846.04 594.06L836.71 590.80L827.39 587.54L818.10 584.28L808.84 581.02L799.60 577.76L790.40 574.50L781.22 571.24L772.09 567.98L763.00 564.73L753.94 561.47L744.94 558.21L735.98 554.95L727.07 551.69L718.21 548.43L709.42 545.17L700.68 541.91L692.00 538.65L683.38 535.39L674.83 532.13L666.36 528.88L657.95 525.62L649.62 522.36L641.36 519.10L633.18 515.84L625.09 512.58L617.08 509.32L609.16 506.06L601.33 502.80L593.58 499.55L585.94 496.29L578.39 493.03L570.93 489.77L563.58 486.51L556.33 483.25L549.19 479.99L542.15 476.73L535.23 473.47L528.41 470.21L521.71 466.96L515.13 463.70L508.66 460.44L502.32 457.18L496.09 453.92L489.99 450.66L484.02 447.40L478.17 444.14L472.45 440.88L466.86 437.62L461.41 434.37L456.09 431.11L450.90 427.85L445.86 424.59L440.95 421.33L436.18 418.07L431.55 414.81L427.07 411.55L422.73 408.29L418.54 405.03L414.50 401.77L410.60 398.52L406.86 395.26L403.26 392.00L399.82 388.74L396.53 385.48L393.39 382.22L390.41 378.96L387.59 375.70L384.92 372.44L382.41 369.19L380.06 365.93L377.86 362.67L375.83 359.41L373.96 356.15L372.25 352.89L370.70 349.63L369.31 346.37L368.08 343.11L367.02 339.85L366.12 336.60L365.38 333.34L364.81 330.08L364.40 326.82L364.15 323.56L364.07 320.30L364.15 317.04L364.40 313.78L364.81 310.52L365.38 307.26L366.12 304.00L367.02 300.75L368.08 297.49L369.31 294.23L370.70 290.97L372.25 287.71L373.96 284.45L375.83 281.19L377.86 277.93L380.06 274.67L382.41 271.42L384.92 268.16L387.59 264.90L390.41 261.64L393.39 258.38L396.53 255.12L399.82 251.86L403.26 248.60L406.86 245.34L410.60 242.08L414.50 238.83L418.54 235.57L422.73 232.31L427.07 229.05L431.55 225.79L436.18 222.53L440.95 219.27L445.86 216.01L450.90 212.75L456.09 209.49L461.41 206.24L466.86 202.98L472.45 199.72L478.17 196.46L484.02 193.20L489.99 189.94L496.09 186.68L502.32 183.42L508.66 180.16L515.13 176.90L521.71 173.65L528.41 170.39L535.23 167.13L542.15 163.87L549.19 160.61L556.33 157.35L563.58 154.09L570.93 150.83L578.39 147.57L585.94 144.31L593.58 141.06L601.33 137.80L609.16 134.54L617.08 131.28L625.09 128.02L633.18 124.76L641.36 121.50L649.62 118.24L657.95 114.98L666.36 111.72L674.83 108.47L683.38 105.21L692.00 101.95L700.68 98.69L709.42 95.43L718.21 92.17L727.07 88.91L735.98 85.65L744.94 82.39L753.94 79.13L763.00 75.88L772.09 72.62L781.22 69.36L790.40 66.10L799.60 62.84L808.84 59.58L818.10 56.32L827.39 53.06L836.71 49.80L846.04 46.54L855.39 43.29L864.75 40.03L874.13 36.77L883.52 33.51L892.91 30.25L902.30 26.99"/>
<path d="M902.30 613.61L892.05 610.35L881.81 607.09L871.57 603.83L861.34 600.57L851.13 597.32L840.93 594.06L830.74 590.80L820.58 587.54L810.45 584.28L800.34 581.02L790.26 577.76L780.22 574.50L770.22 571.24L760.25 567.98L750.33 564.73L740.46 561.47L730.63 558.21L720.86 554.95L711.14 551.69L701.48 548.43L691.88 545.17L682.35 541.91L672.88 538.65L663.48 535.39L654.16 532.13L644.91 528.88L635.73 525.62L626.65 522.36L617.64 519.10L608.72 515.84L599.89 512.58L591.15 509.32L582.51 506.06L573.96 502.80L565.52 499.55L557.18 496.29L548.94 493.03L540.81 489.77L532.79 486.51L524.88 483.25L517.09 479.99L509.41 476.73L501.86 473.47L494.42 470.21L487.12 466.96L479.93 463.70L472.88 460.44L465.96 457.18L459.16 453.92L452.51 450.66L445.99 447.40L439.61 444.14L433.37 440.88L427.28 437.62L421.33 434.37L415.52 431.11L409.87 427.85L404.36 424.59L399.01 421.33L393.80 418.07L388.76 414.81L383.87 411.55L379.14 408.29L374.56 405.03L370.15 401.77L365.90 398.52L361.82 395.26L357.89 392.00L354.14 388.74L350.55 385.48L347.13 382.22L343.88 378.96L340.80 375.70L337.89 372.44L335.15 369.19L332.58 365.93L330.19 362.67L327.97 359.41L325.93 356.15L324.06 352.89L322.37 349.63L320.85 346.37L319.52 343.11L318.36 339.85L317.37 336.60L316.57 333.34L315.94 330.08L315.50 326.82L315.23 323.56L315.14 320.30L315.23 317.04L315.50 313.78L315.94 310.52L316.57 307.26L317.37 304.00L318.36 300.75L319.52 297.49L320.85 294.23L322.37 290.97L324.06 287.71L325.93 284.45L327.97 281.19L330.19 277.93L332.58 274.67L335.15 271.42L337.89 268.16L340.80 264.90L343.88 261.64L347.13 258.38L350.55 255.12L354.14 251.86L357.89 248.60L361.82 245.34L365.90 242.08L370.15 238.83L374.56 235.57L379.14 232.31L383.87 229.05L388.76 225.79L393.80 222.53L399.01 219.27L404.36 216.01L409.87 212.75L415.52 209.49L421.33 206.24L427.28 202.98L433.37 199.72L439.61 196.46L445.99 193.20L452.51 189.94L459.16 186.68L465.96 183.42L472.88 180.16L479.93 176.90L487.12 173.65L494.42 170.39L501.86 167.13L509.41 163.87L517.09 160.61L524.88 157.35L532.79 154.09L540.81 150.83L548.94 147.57L557.18 144.31L565.52 141.06L573.96 137.80L582.51 134.54L591.15 131.28L599.89 128.02L608.72 124.76L617.64 121.50L626.65 118.24L635.73 114.98L644.91 111.72L654.16 108.47L663.48 105.21L672.88 101.95L682.35 98.69L691.88 95.43L701.48 92.17L711.14 88.91L720.86 85.65L730.63 82.39L740.46 79.13L750.33 75.88L760.25 72.62L770.22 69.36L780.22 66.10L790.26 62.84L800.34 59.58L810.45 56.32L820.58 53.06L830.74 49.80L840.93 46.54L851.13 43.29L861.34 40.03L871.57 36.77L881.81 33.51L892.05 30.25L902.30 26.99"/>
</g>
<text x="300.29" y="330.20" fill="#8c8c8c" font-family="Liberation Sans, sans-serif" font-size="10.5" textLength="24.9" lengthAdjust="spacingAndGlyphs">+180</text>
<circle cx="329.99" cy="323.70" r="1.0" fill="none" stroke="#8c8c8c" stroke-width="0.7"/>
<text x="398.15" y="330.20" fill="#8c8c8c" font-family="Liberation Sans, sans-serif" font-size="10.5" textLength="24.9" lengthAdjust="spacingAndGlyphs">+150</text>
<circle cx="427.85" cy="323.70" r="1.0" fill="none" stroke="#8c8c8c" stroke-width="0.7"/>
<text x="496.01" y="330.20" fill="#8c8c8c" font-family="Liberation Sans, sans-serif" font-size="10.5" textLength="24.9" lengthAdjust="spacingAndGlyphs">+120</text>
<circle cx="525.71" cy="323.70" r="1.0" fill="none" stroke="#8c8c8c" stroke-width="0.7"/>
<text x="596.62" y="330.20" fill="#8c8c8c" font-family="Liberation Sans, sans-serif" font-size="10.5" textLength="19.4" lengthAdjust="spacingAndGlyphs">+90</text>
<circle cx="620.82" cy="323.70" r="1.0" fill="none" stroke="#8c8c8c" stroke-width="0.7"/>
<text x="694.48" y="330.20" fill="#8c8c8c" font-family="Liberation Sans, sans-serif" font-size="10.5" textLength="19.4" lengthAdjust="spacingAndGlyphs">+60</text>
<circle cx="718.68" cy="323.70" r="1.0" fill="none" stroke="#8c8c8c" stroke-width="0.7"/>
<text x="792.34" y="330.20" fill="#8c8c8c" font-family="Liberation Sans, sans-serif" font-size="10.5" textLength="19.4" lengthAdjust="spacingAndGlyphs">+30</text>
<circle cx="816.54" cy="323.70" r="1.0" fill="none" stroke="#8c8c8c" stroke-width="0.7"/>
<text x="893.15" y="330.20" fill="#8c8c8c" font-family="Liberation Sans, sans-serif" font-size="10.5" textLength="13.5" lengthAdjust="spacingAndGlyphs">+0</text>
<circle cx="911.45" cy="323.70" r="1.0" fill="none" stroke="#8c8c8c" stroke-width="0.7"/>
<text x="985.31" y="330.20" fill="#8c8c8c" font-family="Liberation Sans, sans-serif" font-size="10.5" textLength="24.9" lengthAdjust="spacingAndGlyphs">+330</text>
<circle cx="1015.01" cy="323.70" r="1.0" fill="none" stroke="#8c8c8c" stroke-width="0.7"/>
<text x="1083.17" y="330.20" fill="#8c8c8c" font-family="Liberation Sans, sans-serif" font-size="10.5" textLength="24.9" lengthAdjust="spacingAndGlyphs">+300</text>
<circle cx="1112.87" cy="323.70" r="1.0" fill="none" stroke="#8c8c8c" stroke-width="0.7"/>
<text x="1181.03" y="330.20" fill="#8c8c8c" font-family="Liberation Sans, sans-serif" font-size="10.5" textLength="24.9" lengthAdjust="spacingAndGlyphs">+270</text>
<circle cx="1210.73" cy="323.70" r="1.0" fill="none" stroke="#8c8c8c" stroke-width="0.7"/>
<text x="1278.89" y="330.20" fill="#8c8c8c" font-family="Liberation Sans, sans-serif" font-size="10.5" textLength="24.9" lengthAdjust="spacingAndGlyphs">+240</text>
<circle cx="1308.59" cy="323.70" r="1.0" fill="none" stroke="#8c8c8c" stroke-width="0.7"/>
<text x="1376.75" y="330.20" fill="#8c8c8c" font-family="Liberation Sans, sans-serif" font-size="10.5" textLength="24.9" lengthAdjust="spacingAndGlyphs">+210</text>
<circle cx="1406.45" cy="323.70" r="1.0" fill="none" stroke="#8c8c8c" stroke-width="0.7"/>
<text x="1474.61" y="330.20" fill="#8c8c8c" font-family="Liberation Sans, sans-serif" font-size="10.5" textLength="24.9" lengthAdjust="spacingAndGlyphs">+180</text>
<circle cx="1504.31" cy="323.70" r="1.0" fill="none" stroke="#8c8c8c" stroke-width="0.7"/>
<text x="890.00" y="24.69" fill="#8c8c8c" font-family="Liberation Sans, sans-serif" font-size="10.5" textLength="19.4" lengthAdjust="spacingAndGlyphs">+90</text>
<circle cx="914.20" cy="18.19" r="1.0" fill="none" stroke="#8c8c8c" stroke-width="0.7"/>
<text x="890.00" y="122.46" fill="#8c8c8c" font-family="Liberation Sans, sans-serif" font-size="10.5" textLength="19.4" lengthAdjust="spacingAndGlyphs">+60</text>
<circle cx="914.20" cy="115.96" r="1.0" fill="none" stroke="#8c8c8c" stroke-width="0.7"/>
<text x="890.00" y="220.23" fill="#8c8c8c" font-family="Liberation Sans, sans-serif" font-size="10.5" textLength="19.4" lengthAdjust="spacingAndGlyphs">+30</text>
<circle cx="914.20" cy="213.73" r="1.0" fill="none" stroke="#8c8c8c" stroke-width="0.7"/>
<text x="890.00" y="428.47" fill="#8c8c8c" font-family="Liberation Sans, sans-serif" font-size="10.5" textLength="19.4" lengthAdjust="spacingAndGlyphs">&#8722;30</text>
<circle cx="914.20" cy="421.97" r="1.0" fill="none" stroke="#8c8c8c" stroke-width="0.7"/>
<text x="890.00" y="526.24" fill="#8c8c8c" font-family="Liberation Sans, sans-serif" font-size="10.5" textLength="19.4" lengthAdjust="spacingAndGlyphs">&#8722;60</text>
<circle cx="914.20" cy="519.74" r="1.0" fill="none" stroke="#8c8c8c" stroke-width="0.7"/>
<text x="890.00" y="624.01" fill="#8c8c8c" font-family="Liberation Sans, sans-serif" font-size="10.5" textLength="19.4" lengthAdjust="spacingAndGlyphs">&#8722;90</text>
<circle cx="914.20" cy="617.51" r="1.0" fill="none" stroke="#8c8c8c" stroke-width="0.7"/>
<g fill="#fff" font-family="Liberation Mono, monospace" font-size="14">
<text x="316" y="29.70">UK00B1</text>
<text x="316" y="42.82">Beg: 20251108 01:42:35 (sol = 225.55&#176;)</text>
<text x="316" y="55.94">End: 20251108 03:48:30 (sol = 225.64&#176;)</text>
<text x="316" y="69.06">--------------------------------------</text>
<text x="316" y="82.18">...: 5</text>
<text x="316" y="95.30">STA: 5</text>
<text x="316" y="108.42">NTA: 3</text>
<text x="316" y="121.54">KUM: 2</text>
<text x="316" y="134.66">LEO: 1</text>
<text x="316" y="147.78">OER: 1</text>
</g>
<path d="M363.0 265.0C366.7 265.8 374.4 270.6 385.0 270.0C395.6 269.4 411.4 263.6 426.7 261.7C442.0 259.8 462.8 259.0 476.7 258.3C490.6 257.6 496.1 257.1 510.0 257.5C523.9 257.9 542.0 258.4 560.0 260.8C578.0 263.2 601.1 268.5 617.8 272.0C634.5 275.5 643.7 277.2 660.0 281.7C676.3 286.2 691.9 291.0 715.6 298.9C739.3 306.8 775.3 319.9 802.2 328.9C829.1 337.9 864.5 349.0 877.0 353.0" fill="none" stroke="#8c8c8c" stroke-width="1" stroke-dasharray="1 2.4" opacity="0.8"/>
<path d="M415.0 265.0C416.9 268.6 419.2 276.4 426.7 286.7C434.2 297.0 448.9 315.6 460.0 326.7C471.1 337.8 482.2 344.7 493.3 353.3C504.4 361.9 510.0 369.0 526.7 378.3C543.4 387.6 569.9 398.4 593.3 408.9C616.7 419.3 654.7 435.6 667.0 441.0" fill="none" stroke="#8c8c8c" stroke-width="1" stroke-dasharray="1 2.4" opacity="0.8"/>
<path d="M780.4 111.1C780.9 121.5 782.5 152.6 783.6 173.3C784.7 194.1 784.6 214.8 786.7 235.6C788.8 256.4 790.8 279.7 796.0 297.8C801.2 315.9 812.5 335.8 817.8 344.5C823.1 353.2 826.3 349.1 828.0 350.0" fill="none" stroke="#8c8c8c" stroke-width="1" stroke-dasharray="1 2.4" opacity="0.8"/>
<path d="M740.0 105.0C748.3 103.5 772.8 98.2 790.0 96.0C807.2 93.8 829.5 85.3 843.0 92.0C856.5 98.7 861.9 120.9 870.7 136.0C879.5 151.1 885.8 161.4 895.6 182.7C905.5 204.0 924.1 250.1 929.8 263.6" fill="none" stroke="#8c8c8c" stroke-width="1" stroke-dasharray="1 2.4" opacity="0.8"/>
<path d="M434.5 201.2C440.2 198.5 457.5 190.6 468.9 185.1C480.3 179.6 492.9 172.1 503.1 168.2C513.3 164.3 521.8 163.4 530.0 161.7C538.2 160.0 544.8 158.9 552.2 158.1C559.6 157.2 566.4 157.2 574.4 156.6C582.4 156.0 586.9 154.8 600.0 154.5C613.1 154.2 640.9 154.1 653.1 154.8C665.3 155.5 667.4 156.2 673.4 158.7C679.4 161.2 684.2 165.7 688.9 169.6C693.6 173.5 698.0 177.6 701.4 182.0C704.8 186.4 706.5 191.1 709.1 196.0C711.7 200.9 714.3 206.4 716.9 211.6C719.5 216.8 722.7 223.0 724.7 227.1C726.7 231.2 728.3 234.5 729.0 236.0" fill="none" stroke="#e014f5" stroke-width="1.5" stroke-dasharray="1.5 2.2"/>
<path d="M432.0 209.0C438.3 207.1 458.7 200.8 470.0 197.5C481.3 194.2 490.0 191.6 500.0 189.0C510.0 186.4 521.3 183.7 530.0 181.7C538.7 179.7 544.8 178.8 552.2 177.2C559.6 175.6 566.4 173.3 574.4 171.9C582.4 170.5 586.9 169.5 600.0 168.8C613.1 168.2 639.6 165.8 653.1 168.0C666.6 170.2 673.8 176.8 681.1 182.0C688.4 187.2 691.5 192.6 696.7 199.1C701.9 205.6 707.9 214.7 712.3 220.9C716.7 227.1 721.3 233.9 723.1 236.5" fill="none" stroke="#e014f5" stroke-width="1.5" stroke-dasharray="1.5 2.2"/>
<path d="M429.0 245.5C435.8 243.2 457.4 235.8 470.0 232.0C482.6 228.2 491.8 225.6 504.6 222.4C517.4 219.2 530.7 215.4 546.6 213.1C562.5 210.8 583.5 208.9 600.0 208.4C616.5 207.9 633.1 208.9 645.3 210.0C657.5 211.1 666.1 212.9 673.4 214.7C680.7 216.5 680.6 217.3 688.9 220.9C697.2 224.5 717.4 233.9 723.1 236.5" fill="none" stroke="#e014f5" stroke-width="1.5" stroke-dasharray="1.5 2.2"/>
<path d="M448.5 217.5C452.1 216.6 458.8 214.7 470.0 212.0C481.2 209.3 500.1 203.9 515.5 201.4C530.9 198.9 548.1 197.8 562.2 196.8C576.3 195.8 586.7 193.8 600.0 195.2C613.3 196.6 631.3 202.1 642.2 205.3C653.1 208.6 657.8 211.1 665.6 214.7C673.4 218.3 680.4 221.4 688.9 227.1C697.4 232.8 711.4 243.6 716.9 248.9C722.4 254.2 720.4 255.7 722.0 259.0C723.6 262.4 725.9 267.3 726.7 269.0" fill="none" stroke="#ff1400" stroke-width="1.5" stroke-dasharray="1.5 2.2"/>
<path d="M384.0 264.5C392.4 261.9 420.3 252.5 434.6 248.9C448.9 245.3 456.5 245.1 470.0 243.0C483.5 240.9 497.2 238.4 515.5 236.4C533.8 234.4 558.9 231.0 580.0 231.0C601.1 231.0 626.6 234.3 642.2 236.5C657.8 238.7 661.7 240.6 673.4 244.2C685.1 247.8 704.5 255.2 712.3 258.3C720.1 261.4 717.6 261.1 720.0 263.0C722.4 264.9 725.6 268.4 726.7 269.5" fill="none" stroke="#ff1400" stroke-width="1.5" stroke-dasharray="1.5 2.2"/>
<path d="M577.7 164.1C581.4 163.4 589.2 160.7 600.0 160.0C610.8 159.3 631.5 159.1 642.2 160.2C652.9 161.3 658.3 164.2 664.0 166.5C669.7 168.8 672.4 170.8 676.5 174.2C680.6 177.6 684.8 181.2 688.9 186.7C693.0 192.1 697.5 200.4 701.4 206.9C705.3 213.4 709.2 220.2 712.3 225.6C715.4 231.0 718.0 234.9 720.0 239.6C722.0 244.3 722.9 249.3 724.0 254.0C725.1 258.7 726.2 265.7 726.7 268.0" fill="none" stroke="#ff1400" stroke-width="1.5" stroke-dasharray="1.5 2.2"/>
<path d="M560.0 168.0C566.7 167.2 586.3 163.8 600.0 163.0C613.7 162.2 631.0 161.7 642.2 163.3C653.4 164.9 660.9 169.6 667.1 172.7C673.3 175.8 676.0 178.9 679.6 182.0C683.2 185.1 684.8 186.1 688.9 191.3C693.0 196.5 699.8 206.1 704.5 213.1C709.2 220.1 714.0 227.2 716.9 233.4C719.8 239.6 720.4 244.2 722.0 250.0C723.6 255.8 725.9 265.0 726.7 268.0" fill="none" stroke="#ff1400" stroke-width="1.5" stroke-dasharray="1.5 2.2"/>
<path d="M763.0 72.0C767.8 71.0 785.1 67.3 791.6 66.0C798.1 64.7 798.5 64.6 802.2 64.2C805.9 63.8 811.3 63.7 813.8 63.8C816.3 63.9 816.4 64.0 817.3 64.7C818.2 65.4 818.9 67.1 819.1 68.2C819.3 69.3 819.0 70.2 818.7 71.3C818.4 72.4 818.6 72.8 817.3 74.9C816.0 77.1 813.9 80.1 811.1 84.2C808.3 88.3 804.0 94.3 800.4 99.3C796.8 104.3 793.3 109.0 789.8 114.0C786.2 119.0 782.2 124.5 779.1 129.1C776.0 133.7 774.2 137.3 771.4 141.6C768.6 145.9 765.9 148.0 762.5 155.0C759.1 162.0 755.7 172.9 751.2 183.6C746.7 194.3 739.2 210.6 735.6 219.4C732.0 228.2 730.8 231.4 729.4 236.5C728.0 241.6 727.8 246.6 727.3 250.0C726.8 253.4 726.4 254.0 726.3 257.0C726.2 260.0 726.6 266.2 726.7 268.0" fill="none" stroke="#ff1400" stroke-width="1.5" stroke-dasharray="1.5 2.2"/>
<path d="M1048.6 74.4C1059.0 79.8 1091.3 95.8 1111.0 106.6C1130.7 117.4 1146.8 126.8 1166.7 139.3C1186.6 151.8 1219.9 174.4 1230.6 181.4" fill="none" stroke="#ff1400" stroke-width="1.5" stroke-dasharray="1.5 2.2"/>
<path d="M633.0 158.0C634.0 160.4 637.1 167.1 639.1 172.7C641.1 178.2 643.2 184.6 645.3 191.3C647.4 198.0 648.7 204.8 651.6 213.1C654.5 221.4 657.8 229.9 662.5 241.1C667.2 252.2 674.8 271.2 679.6 280.0C684.4 288.8 685.5 286.8 691.1 294.0C696.7 301.2 709.5 318.4 713.2 323.3" fill="none" stroke="#ee82ee" stroke-width="1.5" stroke-dasharray="1.5 2.2"/>
<path d="M444.0 261.2C447.7 257.5 446.3 253.2 466.0 239.0C485.7 224.8 546.2 186.3 562.2 175.8" fill="none" stroke="#1414e0" stroke-width="1.5" stroke-dasharray="1.5 2.2"/>
<path d="M367.5 242.5L445.0 232.0" fill="none" stroke="#5ad21e" stroke-width="1.5" stroke-dasharray="1.5 2.2"/>
<path d="M1421.7 252.2L1440.3 243.3" fill="none" stroke="#5ad21e" stroke-width="1.5" stroke-dasharray="1.5 2.2"/>
<path d="M425.5 204.0L434.5 201.2" fill="none" stroke="#e014f5" stroke-width="2"/>
<path d="M410.0 216.2L432.0 209.0" fill="none" stroke="#e014f5" stroke-width="2"/>
<path d="M393.0 258.0L429.0 245.5" fill="none" stroke="#e014f5" stroke-width="2"/>
<path d="M416.0 226.0L448.5 217.5" fill="none" stroke="#ff1400" stroke-width="2"/>
<path d="M371.5 269.0L384.0 264.5" fill="none" stroke="#ff1400" stroke-width="2"/>
<path d="M536.5 171.9L577.7 164.1" fill="none" stroke="#ff1400" stroke-width="2"/>
<path d="M1230.6 181.4L1255.0 200.0" fill="none" stroke="#ff1400" stroke-width="2"/>
<path d="M441.0 264.5L444.0 261.2" fill="none" stroke="#1414e0" stroke-width="2"/>
<path d="M447.0 236.0L465.0 225.5" fill="none" stroke="#7a7a7a" stroke-width="1.3"/>
<path d="M371.0 271.0L386.5 269.5" fill="none" stroke="#7a7a7a" stroke-width="1.3"/>
<path d="M1147.0 114.7L1155.6 119.4" fill="none" stroke="#7a7a7a" stroke-width="1.3"/>
<path d="M1321.9 180.3L1333.4 189.0" fill="none" stroke="#7a7a7a" stroke-width="1.3"/>
<path d="M1305.0 170.3L1305.6 173.9" fill="none" stroke="#e014f5" stroke-width="2"/>
<path d="M1379.0 205.0L1382.0 210.0" fill="none" stroke="#e014f5" stroke-width="2"/>
<circle cx="486.7" cy="223.3" r="1.2" fill="#ff7a7a"/>
<circle cx="536.7" cy="171.9" r="1.2" fill="#ff7a7a"/>
<circle cx="566.9" cy="167.9" r="1.2" fill="#ff7a7a"/>
<circle cx="410" cy="216.2" r="1.2" fill="#ff7a7a"/>
<circle cx="393" cy="258" r="1.2" fill="#ff7a7a"/>
<circle cx="441" cy="264.5" r="1.2" fill="#ff7a7a"/>
<circle cx="371.5" cy="269" r="1.2" fill="#ff7a7a"/>
<circle cx="416" cy="226" r="1.2" fill="#ff7a7a"/>
<circle cx="1421.7" cy="252.2" r="1.2" fill="#ff7a7a"/>
<circle cx="1305.6" cy="173.9" r="1.2" fill="#ff7a7a"/>
<circle cx="1382" cy="210" r="1.2" fill="#ff7a7a"/>
<circle cx="1255" cy="200" r="1.2" fill="#ff7a7a"/>
<ellipse cx="0" cy="0" rx="56.4" ry="10.5" transform="translate(561.25,174.4) rotate(-25.1)" fill="none" stroke="#1414e0" stroke-width="2"/>
<ellipse cx="0" cy="0" rx="43" ry="14.2" transform="translate(469.6,236.2) rotate(-30.6)" fill="none" stroke="#5ad21e" stroke-width="2"/>
<ellipse cx="0" cy="0" rx="28.9" ry="21.1" transform="translate(730.6,266.7) rotate(-36.7)" fill="none" stroke="#ff1400" stroke-width="2"/>
<ellipse cx="0" cy="0" rx="31.4" ry="19.3" transform="translate(739.6,244) rotate(-39.9)" fill="none" stroke="#e014f5" stroke-width="2"/>
<ellipse cx="0" cy="0" rx="25" ry="25" transform="translate(721.8,317.5) rotate(0)" fill="none" stroke="#ee82ee" stroke-width="2"/>
<g stroke="#ff1400" stroke-width="1.1" fill="none">
<path d="M562.7 175.8h5.2M565.3 173.2v5.2"/>
<path d="M561.1 185.9h5.2M563.7 183.3v5.2"/>
<path d="M473.0 229.7h5.2M475.6 227.1v5.2"/>
<path d="M732.1 249.7h5.2M734.7 247.1v5.2"/>
<path d="M724.1 270.0h5.2M726.7 267.4v5.2"/>
<path d="M710.6 325.3h5.2M713.2 322.7v5.2"/>
</g>
<g fill="#fff" font-family="Liberation Sans, sans-serif" font-size="11">
<text transform="translate(559.9,176.6) scale(0.94,1)" text-anchor="middle">KUM</text>
<text transform="translate(467.7,238.4) scale(0.94,1)" text-anchor="middle">LEO</text>
<text transform="translate(739.6,248.3) scale(0.94,1)" text-anchor="middle">NTA</text>
<text transform="translate(730.8,268.7) scale(0.94,1)" text-anchor="middle">STA</text>
<text transform="translate(722.3,320) scale(0.94,1)" text-anchor="middle">OER</text>
</g>
<g fill="#555" font-family="Liberation Sans, sans-serif" font-size="29.3">
<text transform="translate(147.90,697.10) rotate(-90) scale(0.9119,1)" x="0" y="0">APR</text>
<text transform="translate(294.20,701.90) rotate(-90) scale(0.9587,1)" x="0" y="0">MAY</text>
<text transform="translate(434.90,688.00) rotate(-90) scale(0.8112,1)" x="0" y="0">JUN</text>
<text transform="translate(576.20,687.00) rotate(-90) scale(0.8844,1)" x="0" y="0">JUL</text>
<text transform="translate(722.80,699.90) rotate(-90) scale(0.9117,1)" x="0" y="0">AUG</text>
<text transform="translate(871.00,695.00) rotate(-90) scale(0.8929,1)" x="0" y="0">SEP</text>
<text transform="translate(1016.00,701.40) rotate(-90) scale(0.9566,1)" x="0" y="0">OCT</text>
<text transform="translate(1169.00,705.50) rotate(-90) scale(0.9541,1)" x="0" y="0">NOV</text>
<text transform="translate(1317.70,700.90) rotate(-90) scale(0.9276,1)" x="0" y="0">DEC</text>
<text transform="translate(1468.30,685.10) rotate(-90) scale(0.8078,1)" x="0" y="0">JAN</text>
<text transform="translate(1627.10,697.00) rotate(-90) scale(0.8965,1)" x="0" y="0">FEB</text>
<text transform="translate(1764.90,705.70) rotate(-90) scale(0.9574,1)" x="0" y="0">MAR</text>
</g>
<line x1="1126.6" y1="641.6" x2="1126.6" y2="842.4" stroke="#ff0000" stroke-width="1.7" stroke-dasharray="5.5 1.9" stroke-dashoffset="3.4"/>
<rect x="106.0" y="832" width="24.0" height="4" fill="#eb82eb"/>
<rect x="165.0" y="832" width="180.0" height="4" fill="#eb82eb"/>
<rect x="366.0" y="832" width="258.7" height="4" fill="#eb82eb"/>
<rect x="635.9" y="832" width="150.8" height="4" fill="#eb82eb"/>
<rect x="807.3" y="832" width="92.6" height="4" fill="#eb82eb"/>
<rect x="920.0" y="832" width="52.9" height="4" fill="#eb82eb"/>
<rect x="984.2" y="832" width="81.8" height="4" fill="#eb82eb"/>
<rect x="1082.0" y="832" width="122.0" height="4" fill="#eb82eb"/>
<rect x="1244.0" y="832" width="82.0" height="4" fill="#eb82eb"/>
<rect x="1337.0" y="832" width="19.0" height="4" fill="#eb82eb"/>
<rect x="1381.0" y="832" width="63.0" height="4" fill="#eb82eb"/>
<rect x="1459.0" y="832" width="53.0" height="4" fill="#eb82eb"/>
<rect x="1523.0" y="832" width="24.0" height="4" fill="#eb82eb"/>
<rect x="1724.0" y="832" width="24.0" height="4" fill="#eb82eb"/>
<rect x="1758.0" y="832" width="24.0" height="4" fill="#eb82eb"/>
<rect x="165.0" y="816" width="23.8" height="4" fill="#e114f5"/>
<rect x="224.2" y="816" width="62.8" height="4" fill="#e114f5"/>
<rect x="312.0" y="816" width="28.8" height="4" fill="#e114f5"/>
<rect x="366.0" y="816" width="126.9" height="4" fill="#e114f5"/>
<rect x="507.9" y="816" width="145.8" height="4" fill="#e114f5"/>
<rect x="704.0" y="816" width="34.0" height="4" fill="#e114f5"/>
<rect x="773.0" y="816" width="72.8" height="4" fill="#e114f5"/>
<rect x="870.9" y="816" width="117.0" height="4" fill="#e114f5"/>
<rect x="1003.0" y="816" width="14.0" height="4" fill="#e114f5"/>
<rect x="1062.0" y="816" width="151.0" height="4" fill="#e114f5"/>
<rect x="1244.0" y="816" width="23.0" height="4" fill="#e114f5"/>
<rect x="1293.0" y="816" width="23.0" height="4" fill="#e114f5"/>
<rect x="1342.0" y="816" width="23.0" height="4" fill="#e114f5"/>
<rect x="1386.0" y="816" width="43.0" height="4" fill="#e114f5"/>
<rect x="1459.0" y="816" width="24.0" height="4" fill="#e114f5"/>
<rect x="1548.0" y="816" width="23.0" height="4" fill="#e114f5"/>
<rect x="165.0" y="800" width="23.8" height="4" fill="#ff1e00"/>
<rect x="258.0" y="800" width="230.1" height="4" fill="#ff1e00"/>
<rect x="507.9" y="800" width="106.9" height="4" fill="#ff1e00"/>
<rect x="625.8" y="800" width="92.1" height="4" fill="#ff1e00"/>
<rect x="729.0" y="800" width="97.0" height="4" fill="#ff1e00"/>
<rect x="948.8" y="800" width="201.2" height="4" fill="#ff1e00"/>
<rect x="1160.0" y="800" width="88.0" height="4" fill="#ff1e00"/>
<rect x="1258.0" y="800" width="186.0" height="4" fill="#ff1e00"/>
<rect x="1459.0" y="800" width="24.0" height="4" fill="#ff1e00"/>
<rect x="1553.0" y="800" width="23.0" height="4" fill="#ff1e00"/>
<rect x="194.2" y="783" width="23.8" height="4" fill="#ffaa14"/>
<rect x="322.0" y="783" width="185.0" height="4" fill="#ffaa14"/>
<rect x="518.0" y="783" width="23.9" height="4" fill="#ffaa14"/>
<rect x="557.1" y="783" width="126.9" height="4" fill="#ffaa14"/>
<rect x="807.3" y="783" width="23.4" height="4" fill="#ffaa14"/>
<rect x="954.0" y="783" width="18.9" height="4" fill="#ffaa14"/>
<rect x="989.2" y="783" width="135.8" height="4" fill="#ffaa14"/>
<rect x="1155.0" y="783" width="63.0" height="4" fill="#ffaa14"/>
<rect x="1244.0" y="783" width="23.0" height="4" fill="#ffaa14"/>
<rect x="1317.0" y="783" width="24.0" height="4" fill="#ffaa14"/>
<rect x="1396.0" y="783" width="23.0" height="4" fill="#ffaa14"/>
<rect x="1464.0" y="783" width="186.0" height="4" fill="#ffaa14"/>
<rect x="341.0" y="767" width="29.0" height="4" fill="#ffe600"/>
<rect x="410.0" y="767" width="38.0" height="4" fill="#ffe600"/>
<rect x="468.9" y="767" width="24.0" height="4" fill="#ffe600"/>
<rect x="528.1" y="767" width="17.8" height="4" fill="#ffe600"/>
<rect x="562.0" y="767" width="29.0" height="4" fill="#ffe600"/>
<rect x="616.1" y="767" width="32.7" height="4" fill="#ffe600"/>
<rect x="958.9" y="767" width="29.0" height="4" fill="#ffe600"/>
<rect x="1062.0" y="767" width="24.0" height="4" fill="#ffe600"/>
<rect x="1101.0" y="767" width="24.0" height="4" fill="#ffe600"/>
<rect x="1160.0" y="767" width="34.0" height="4" fill="#ffe600"/>
<rect x="1249.0" y="767" width="23.0" height="4" fill="#ffe600"/>
<rect x="1425.0" y="767" width="87.0" height="4" fill="#ffe600"/>
<rect x="420.0" y="750" width="24.0" height="4" fill="#a0f028"/>
<rect x="533.0" y="750" width="23.0" height="4" fill="#a0f028"/>
<rect x="567.0" y="750" width="24.0" height="4" fill="#a0f028"/>
<rect x="621.0" y="750" width="122.1" height="4" fill="#a0f028"/>
<rect x="969.0" y="750" width="166.0" height="4" fill="#a0f028"/>
<rect x="1185.0" y="750" width="161.0" height="4" fill="#a0f028"/>
<rect x="1469.0" y="750" width="24.0" height="4" fill="#a0f028"/>
<rect x="430.0" y="734" width="22.9" height="4" fill="#5ad200"/>
<rect x="577.0" y="734" width="156.0" height="4" fill="#5ad200"/>
<rect x="994.0" y="734" width="111.0" height="4" fill="#5ad200"/>
<rect x="1116.0" y="734" width="107.0" height="4" fill="#5ad200"/>
<rect x="1263.0" y="734" width="29.0" height="4" fill="#5ad200"/>
<rect x="1489.0" y="734" width="23.0" height="4" fill="#5ad200"/>
<rect x="592.1" y="718" width="22.7" height="4" fill="#00f082"/>
<rect x="655.0" y="718" width="116.9" height="4" fill="#00f082"/>
<rect x="1072.0" y="718" width="171.0" height="4" fill="#00f082"/>
<rect x="1263.0" y="718" width="24.0" height="4" fill="#00f082"/>
<rect x="596.0" y="701" width="137.0" height="4" fill="#00c8f0"/>
<rect x="1092.0" y="701" width="28.0" height="4" fill="#00c8f0"/>
<rect x="1200.0" y="701" width="23.0" height="4" fill="#00c8f0"/>
<rect x="1273.0" y="701" width="53.0" height="4" fill="#00c8f0"/>
<rect x="1111.0" y="685" width="24.0" height="4" fill="#0a14d2"/>
<g stroke="#fff" stroke-opacity="0.36" stroke-width="2" stroke-dasharray="2 3.53">
<line x1="75" y1="641.2" x2="75" y2="842.4"/>
<line x1="219" y1="641.2" x2="219" y2="842.4"/>
<line x1="365" y1="641.2" x2="365" y2="842.4"/>
<line x1="506.1" y1="641.2" x2="506.1" y2="842.4"/>
<line x1="651" y1="641.2" x2="651" y2="842.4"/>
<line x1="796.8" y1="641.2" x2="796.8" y2="842.4"/>
<line x1="939.9" y1="641.2" x2="939.9" y2="842.4"/>
<line x1="1091" y1="641.2" x2="1091" y2="842.4"/>
<line x1="1239" y1="641.2" x2="1239" y2="842.4"/>
<line x1="1394" y1="641.2" x2="1394" y2="842.4"/>
<line x1="1548" y1="641.2" x2="1548" y2="842.4"/>
<line x1="1687" y1="641.2" x2="1687" y2="842.4"/>
</g>
<g fill="none" stroke="#fff" stroke-width="2">
<path d="M114.0 834.0h8M118.0 830.0v8"/>
<path d="M240.7 834.0h8M244.7 830.0v8"/>
<path d="M510.7 834.0h8M514.7 830.0v8"/>
<path d="M706.6 834.0h8M710.6 830.0v8"/>
<path d="M833.9 834.0h8M837.9 830.0v8"/>
<path d="M961.9 834.0h8M965.9 830.0v8"/>
<path d="M987.0 834.0h8M991.0 830.0v8"/>
<path d="M1117.0 834.0h8M1121.0 830.0v8"/>
<path d="M1296.0 834.0h8M1300.0 830.0v8"/>
<path d="M1342.0 834.0h8M1346.0 830.0v8"/>
<path d="M1413.0 834.0h8M1417.0 830.0v8"/>
<path d="M1482.0 834.0h8M1486.0 830.0v8"/>
<path d="M1531.0 834.0h8M1535.0 830.0v8"/>
<path d="M1732.0 834.0h8M1736.0 830.0v8"/>
<path d="M1766.0 834.0h8M1770.0 830.0v8"/>
<path d="M172.7 818.0h8M176.7 814.0v8"/>
<path d="M255.7 818.0h8M259.7 814.0v8"/>
<path d="M323.8 818.0h8M327.8 814.0v8"/>
<path d="M437.7 818.0h8M441.7 814.0v8"/>
<path d="M598.4 818.0h8M602.4 814.0v8"/>
<path d="M716.7 818.0h8M720.7 814.0v8"/>
<path d="M793.7 818.0h8M797.7 814.0v8"/>
<path d="M939.5 818.0h8M943.5 814.0v8"/>
<path d="M1006.0 818.0h8M1010.0 814.0v8"/>
<path d="M1153.0 818.0h8M1157.0 814.0v8"/>
<path d="M1251.0 818.0h8M1255.0 814.0v8"/>
<path d="M1300.0 818.0h8M1304.0 814.0v8"/>
<path d="M1350.0 818.0h8M1354.0 814.0v8"/>
<path d="M1403.0 818.0h8M1407.0 814.0v8"/>
<path d="M1467.0 818.0h8M1471.0 814.0v8"/>
<path d="M1555.0 818.0h8M1559.0 814.0v8"/>
<path d="M174.7 802.0h8M178.7 798.0v8"/>
<path d="M378.8 802.0h8M382.8 798.0v8"/>
<path d="M544.8 802.0h8M548.8 798.0v8"/>
<path d="M682.7 802.0h8M686.7 798.0v8"/>
<path d="M741.8 802.0h8M745.8 798.0v8"/>
<path d="M1074.6 802.0h8M1078.6 798.0v8"/>
<path d="M1217.0 802.0h8M1221.0 798.0v8"/>
<path d="M1305.0 802.0h8M1309.0 798.0v8"/>
<path d="M1467.0 802.0h8M1471.0 798.0v8"/>
<path d="M1560.0 802.0h8M1564.0 798.0v8"/>
<path d="M201.8 785.0h8M205.8 781.0v8"/>
<path d="M400.7 785.0h8M404.7 781.0v8"/>
<path d="M526.0 785.0h8M530.0 781.0v8"/>
<path d="M638.7 785.0h8M642.7 781.0v8"/>
<path d="M814.8 785.0h8M818.8 781.0v8"/>
<path d="M959.7 785.0h8M963.7 781.0v8"/>
<path d="M1040.6 785.0h8M1044.6 781.0v8"/>
<path d="M1188.0 785.0h8M1192.0 781.0v8"/>
<path d="M1251.0 785.0h8M1255.0 781.0v8"/>
<path d="M1325.0 785.0h8M1329.0 781.0v8"/>
<path d="M1403.0 785.0h8M1407.0 781.0v8"/>
<path d="M1545.6 785.0h8M1549.6 781.0v8"/>
<path d="M355.7 769.0h8M359.7 765.0v8"/>
<path d="M426.8 769.0h8M430.8 765.0v8"/>
<path d="M476.8 769.0h8M480.8 765.0v8"/>
<path d="M535.7 769.0h8M539.7 765.0v8"/>
<path d="M570.9 769.0h8M574.9 765.0v8"/>
<path d="M630.8 769.0h8M634.8 765.0v8"/>
<path d="M973.8 769.0h8M977.8 765.0v8"/>
<path d="M1069.6 769.0h8M1073.6 765.0v8"/>
<path d="M1108.6 769.0h8M1112.6 765.0v8"/>
<path d="M1178.0 769.0h8M1182.0 765.0v8"/>
<path d="M1256.0 769.0h8M1260.0 765.0v8"/>
<path d="M1467.0 769.0h8M1471.0 765.0v8"/>
<path d="M427.7 752.0h8M431.7 748.0v8"/>
<path d="M539.7 752.0h8M543.7 748.0v8"/>
<path d="M574.5 752.0h8M578.5 748.0v8"/>
<path d="M703.8 752.0h8M707.8 748.0v8"/>
<path d="M1095.0 752.0h8M1099.0 748.0v8"/>
<path d="M1271.0 752.0h8M1275.0 748.0v8"/>
<path d="M1477.0 752.0h8M1481.0 748.0v8"/>
<path d="M437.8 736.0h8M441.8 732.0v8"/>
<path d="M630.8 736.0h8M634.8 732.0v8"/>
<path d="M1038.6 736.0h8M1042.6 732.0v8"/>
<path d="M1167.6 736.0h8M1171.6 732.0v8"/>
<path d="M1275.0 736.0h8M1279.0 732.0v8"/>
<path d="M1497.0 736.0h8M1501.0 732.0v8"/>
<path d="M598.4 720.0h8M602.4 716.0v8"/>
<path d="M726.8 720.0h8M730.8 716.0v8"/>
<path d="M1188.0 720.0h8M1192.0 716.0v8"/>
<path d="M1271.0 720.0h8M1275.0 716.0v8"/>
<path d="M687.9 703.0h8M691.9 699.0v8"/>
<path d="M1101.6 703.0h8M1105.6 699.0v8"/>
<path d="M1207.0 703.0h8M1211.0 699.0v8"/>
<path d="M1300.0 703.0h8M1304.0 699.0v8"/>
<path d="M1118.6 687.0h8M1122.6 683.0v8"/>
</g>
<g fill="#fff" font-family="Liberation Sans, sans-serif" font-size="11">
<text transform="translate(118.00,831.80) scale(0.94,1)" text-anchor="middle">KSE</text>
<text transform="translate(255.00,831.80) scale(0.94,1)" text-anchor="middle">ETA</text>
<text transform="translate(495.35,831.80) scale(0.94,1)" text-anchor="middle">NZC</text>
<text transform="translate(711.30,831.80) scale(0.94,1)" text-anchor="middle">NDA</text>
<text transform="translate(853.60,831.80) scale(0.94,1)" text-anchor="middle">SPE</text>
<text transform="translate(946.45,831.80) scale(0.94,1)" text-anchor="middle">ARD</text>
<text transform="translate(1025.10,831.80) scale(0.94,1)" text-anchor="middle">EGE</text>
<text transform="translate(1143.00,831.80) scale(0.94,1)" text-anchor="middle">NTA</text>
<text transform="translate(1285.00,831.80) scale(0.94,1)" text-anchor="middle">MON</text>
<text transform="translate(1346.50,831.80) scale(0.94,1)" text-anchor="middle">URS</text>
<text transform="translate(1412.50,831.80) scale(0.94,1)" text-anchor="middle">AHY</text>
<text transform="translate(1485.50,831.80) scale(0.94,1)" text-anchor="middle">GUM</text>
<text transform="translate(1535.00,831.80) scale(0.94,1)" text-anchor="middle">OHY</text>
<text transform="translate(1736.00,831.80) scale(0.94,1)" text-anchor="middle">XHE</text>
<text transform="translate(1770.00,831.80) scale(0.94,1)" text-anchor="middle">EVI</text>
<text transform="translate(176.90,815.42) scale(0.94,1)" text-anchor="middle">AVB</text>
<text transform="translate(255.60,815.42) scale(0.94,1)" text-anchor="middle">ELY</text>
<text transform="translate(326.40,815.42) scale(0.94,1)" text-anchor="middle">CAM</text>
<text transform="translate(429.45,815.42) scale(0.94,1)" text-anchor="middle">SSG</text>
<text transform="translate(580.80,815.42) scale(0.94,1)" text-anchor="middle">PCA</text>
<text transform="translate(721.00,815.42) scale(0.94,1)" text-anchor="middle">AUD</text>
<text transform="translate(809.40,815.42) scale(0.94,1)" text-anchor="middle">AUR</text>
<text transform="translate(929.40,815.42) scale(0.94,1)" text-anchor="middle">DSX</text>
<text transform="translate(1010.00,815.42) scale(0.94,1)" text-anchor="middle">OCU</text>
<text transform="translate(1137.50,815.42) scale(0.94,1)" text-anchor="middle">OER</text>
<text transform="translate(1255.50,815.42) scale(0.94,1)" text-anchor="middle">DKD</text>
<text transform="translate(1304.50,815.42) scale(0.94,1)" text-anchor="middle">DSV</text>
<text transform="translate(1353.50,815.42) scale(0.94,1)" text-anchor="middle">ALY</text>
<text transform="translate(1407.50,815.42) scale(0.94,1)" text-anchor="middle">JLE</text>
<text transform="translate(1471.00,815.42) scale(0.94,1)" text-anchor="middle">SCC</text>
<text transform="translate(1559.50,815.42) scale(0.94,1)" text-anchor="middle">FEV</text>
<text transform="translate(176.90,799.04) scale(0.94,1)" text-anchor="middle">LYR</text>
<text transform="translate(373.05,799.04) scale(0.94,1)" text-anchor="middle">JMC</text>
<text transform="translate(561.35,799.04) scale(0.94,1)" text-anchor="middle">JPE</text>
<text transform="translate(671.85,799.04) scale(0.94,1)" text-anchor="middle">PAU</text>
<text transform="translate(777.50,799.04) scale(0.94,1)" text-anchor="middle">NIA</text>
<text transform="translate(1049.40,799.04) scale(0.94,1)" text-anchor="middle">STA</text>
<text transform="translate(1204.00,799.04) scale(0.94,1)" text-anchor="middle">NOO</text>
<text transform="translate(1351.00,799.04) scale(0.94,1)" text-anchor="middle">COM</text>
<text transform="translate(1471.00,799.04) scale(0.94,1)" text-anchor="middle">NCC</text>
<text transform="translate(1564.50,799.04) scale(0.94,1)" text-anchor="middle">FED</text>
<text transform="translate(206.10,782.66) scale(0.94,1)" text-anchor="middle">HVI</text>
<text transform="translate(414.50,782.66) scale(0.94,1)" text-anchor="middle">ARI</text>
<text transform="translate(529.95,782.66) scale(0.94,1)" text-anchor="middle">SZC</text>
<text transform="translate(620.55,782.66) scale(0.94,1)" text-anchor="middle">CAP</text>
<text transform="translate(819.00,782.66) scale(0.94,1)" text-anchor="middle">NUE</text>
<text transform="translate(963.45,782.66) scale(0.94,1)" text-anchor="middle">OCT</text>
<text transform="translate(1057.10,782.66) scale(0.94,1)" text-anchor="middle">ORI</text>
<text transform="translate(1186.50,782.66) scale(0.94,1)" text-anchor="middle">AMO</text>
<text transform="translate(1255.50,782.66) scale(0.94,1)" text-anchor="middle">DPC</text>
<text transform="translate(1329.00,782.66) scale(0.94,1)" text-anchor="middle">XVI</text>
<text transform="translate(1407.50,782.66) scale(0.94,1)" text-anchor="middle">QUA</text>
<text transform="translate(1557.00,782.66) scale(0.94,1)" text-anchor="middle">AAN</text>
<text transform="translate(355.50,766.28) scale(0.94,1)" text-anchor="middle">TAH</text>
<text transform="translate(429.00,766.28) scale(0.94,1)" text-anchor="middle">JEA</text>
<text transform="translate(480.90,766.28) scale(0.94,1)" text-anchor="middle">JIP</text>
<text transform="translate(537.00,766.28) scale(0.94,1)" text-anchor="middle">PPS</text>
<text transform="translate(576.50,766.28) scale(0.94,1)" text-anchor="middle">ZCS</text>
<text transform="translate(632.45,766.28) scale(0.94,1)" text-anchor="middle">GDR</text>
<text transform="translate(973.40,766.28) scale(0.94,1)" text-anchor="middle">DRA</text>
<text transform="translate(1074.00,766.28) scale(0.94,1)" text-anchor="middle">LUM</text>
<text transform="translate(1113.00,766.28) scale(0.94,1)" text-anchor="middle">RPU</text>
<text transform="translate(1177.00,766.28) scale(0.94,1)" text-anchor="middle">THA</text>
<text transform="translate(1260.50,766.28) scale(0.94,1)" text-anchor="middle">PSU</text>
<text transform="translate(1468.50,766.28) scale(0.94,1)" text-anchor="middle">XCB</text>
<text transform="translate(432.00,749.90) scale(0.94,1)" text-anchor="middle">JRC</text>
<text transform="translate(544.50,749.90) scale(0.94,1)" text-anchor="middle">CAN</text>
<text transform="translate(579.00,749.90) scale(0.94,1)" text-anchor="middle">FAN</text>
<text transform="translate(682.05,749.90) scale(0.94,1)" text-anchor="middle">PER</text>
<text transform="translate(1052.00,749.90) scale(0.94,1)" text-anchor="middle">CTA</text>
<text transform="translate(1265.50,749.90) scale(0.94,1)" text-anchor="middle">HYD</text>
<text transform="translate(1481.00,749.90) scale(0.94,1)" text-anchor="middle">XUM</text>
<text transform="translate(441.45,733.52) scale(0.94,1)" text-anchor="middle">COR</text>
<text transform="translate(655.00,733.52) scale(0.94,1)" text-anchor="middle">SDA</text>
<text transform="translate(1049.50,733.52) scale(0.94,1)" text-anchor="middle">LMI</text>
<text transform="translate(1169.50,733.52) scale(0.94,1)" text-anchor="middle">LEO</text>
<text transform="translate(1277.50,733.52) scale(0.94,1)" text-anchor="middle">EHY</text>
<text transform="translate(1500.50,733.52) scale(0.94,1)" text-anchor="middle">ECV</text>
<text transform="translate(603.45,717.14) scale(0.94,1)" text-anchor="middle">JXA</text>
<text transform="translate(713.45,717.14) scale(0.94,1)" text-anchor="middle">KCG</text>
<text transform="translate(1157.50,717.14) scale(0.94,1)" text-anchor="middle">AND</text>
<text transform="translate(1275.00,717.14) scale(0.94,1)" text-anchor="middle">DAD</text>
<text transform="translate(664.50,700.76) scale(0.94,1)" text-anchor="middle">ERI</text>
<text transform="translate(1106.00,700.76) scale(0.94,1)" text-anchor="middle">SLD</text>
<text transform="translate(1211.50,700.76) scale(0.94,1)" text-anchor="middle">ORS</text>
<text transform="translate(1299.50,700.76) scale(0.94,1)" text-anchor="middle">GEM</text>
<text transform="translate(1123.00,684.38) scale(0.94,1)" text-anchor="middle">KUM</text>
</g>
<rect x="20.4" y="641.6" width="1765.0" height="200.79999999999995" fill="none" stroke="#fff" stroke-width="1.1"/>
<g stroke="#fff" stroke-width="1.1">
<line x1="20.4" y1="842.4" x2="20.4" y2="847.3"/>
<line x1="265.5" y1="842.4" x2="265.5" y2="847.3"/>
<line x1="510.7" y1="842.4" x2="510.7" y2="847.3"/>
<line x1="755.8" y1="842.4" x2="755.8" y2="847.3"/>
<line x1="1001.0" y1="842.4" x2="1001.0" y2="847.3"/>
<line x1="1246.1" y1="842.4" x2="1246.1" y2="847.3"/>
<line x1="1491.2" y1="842.4" x2="1491.2" y2="847.3"/>
<line x1="1736.4" y1="842.4" x2="1736.4" y2="847.3"/>
</g>
<g fill="#fff" font-family="Liberation Sans, sans-serif" font-size="14.5" text-anchor="middle">
<text x="20.4" y="862.2">0</text>
<text x="265.5" y="862.2">50</text>
<text x="510.7" y="862.2">100</text>
<text x="755.8" y="862.2">150</text>
<text x="1001.0" y="862.2">200</text>
<text x="1246.1" y="862.2">250</text>
<text x="1491.2" y="862.2">300</text>
<text x="1736.4" y="862.2">350</text>
</g>
<text x="829" y="881.9" fill="#fff" font-family="Liberation Sans, sans-serif" font-size="14" textLength="147" lengthAdjust="spacingAndGlyphs">Solar longitude (deg)</text>
</svg></body></html>
